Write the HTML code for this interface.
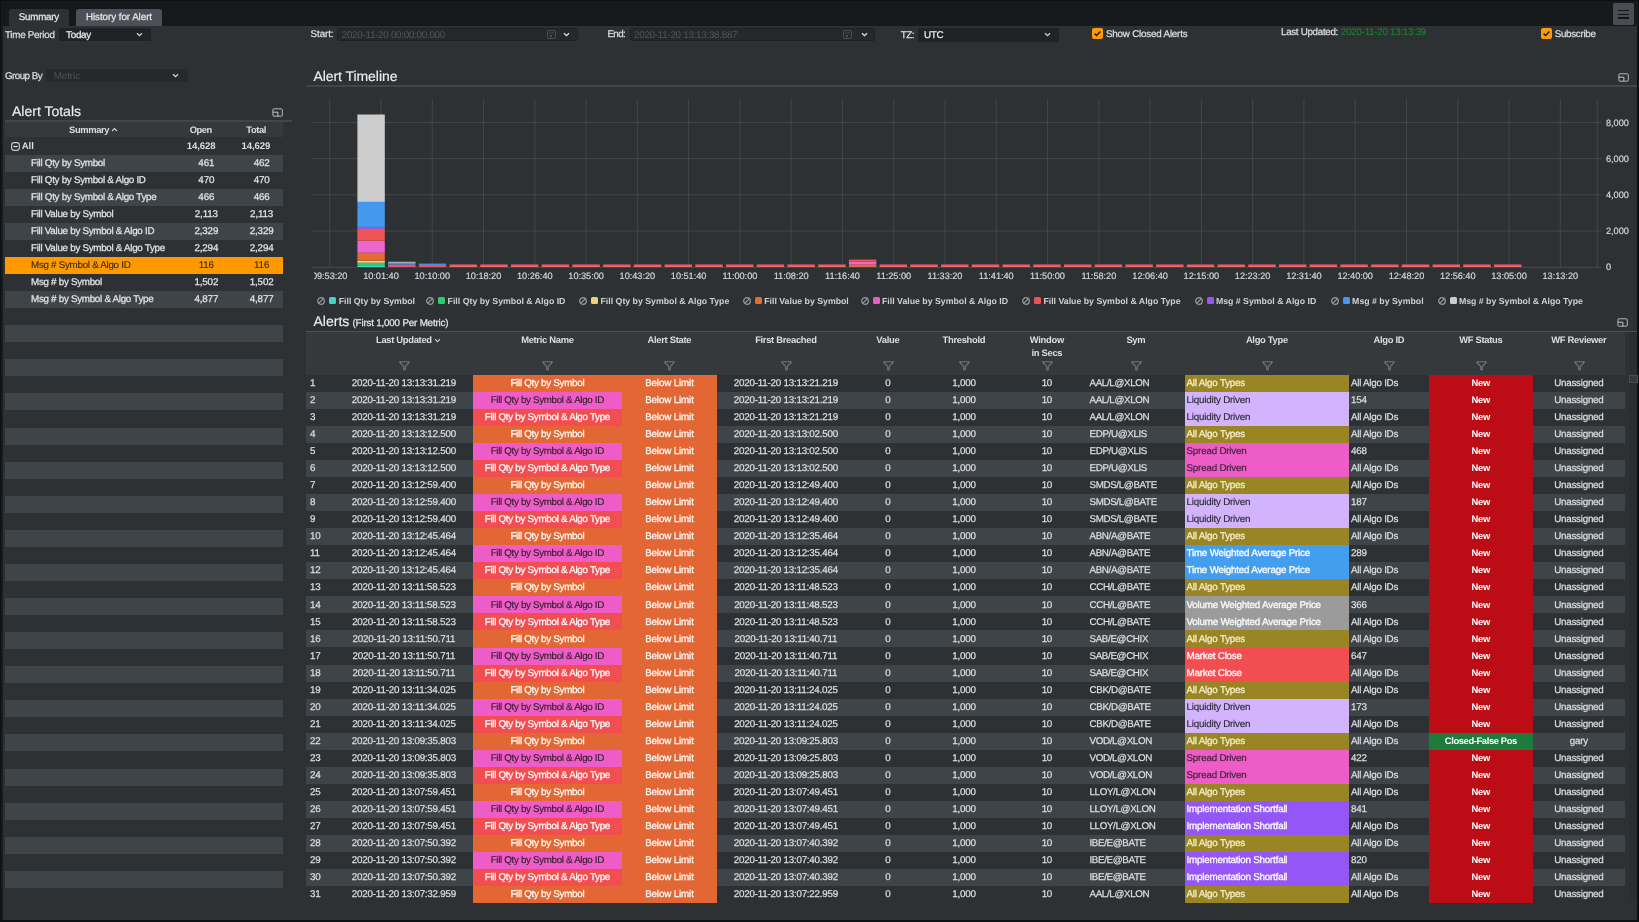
<!DOCTYPE html><html><head><meta charset="utf-8"><style>
*{margin:0;padding:0}
html,body{width:1639px;height:922px;overflow:hidden;background:#0d0f11;font-family:'Liberation Sans',sans-serif;color:#dcdee0}
#wrap{position:absolute;left:0;top:0;width:1639px;height:922px;will-change:transform}
.a{position:absolute}
.t{position:absolute;white-space:nowrap;line-height:20px;text-rendering:geometricPrecision}
</style></head><body><div id="wrap">
<div class="a" style="left:1.00px;top:1.00px;width:1637.00px;height:25.00px;background:#15191c;"></div>
<div class="a" style="left:3.00px;top:26.00px;width:1634.00px;height:894.00px;background:#2d3134;"></div>
<div class="a" style="left:1.00px;top:26.00px;width:2.00px;height:894.00px;background:#191c1f;"></div>
<div class="a" style="left:9.00px;top:9.00px;width:60.00px;height:17.00px;background:#2d3134;border-radius:3px 3px 0 0"></div>
<div class="t" style="left:9.00px;top:8px;font-size:9.8px;letter-spacing:-0.232px;color:#e4e6e8;width:60px;text-align:center;-webkit-text-stroke:0.25px currentColor;"><span style="margin-right:0.232px">Summary</span></div>
<div class="a" style="left:76.00px;top:9.00px;width:86.00px;height:17.00px;background:#4d5157;border-radius:3px 3px 0 0"></div>
<div class="t" style="left:76.00px;top:8px;font-size:9.8px;letter-spacing:-0.051px;color:#e4e6e8;width:86px;text-align:center;-webkit-text-stroke:0.25px currentColor;"><span style="margin-right:0.051px">History for Alert</span></div>
<div class="a" style="left:1613.00px;top:3.00px;width:21.00px;height:22.00px;background:#4a4d52;border-radius:2px"></div>
<div class="a" style="left:1618.00px;top:10.00px;width:11.00px;height:1.40px;background:#15181b;"></div>
<div class="a" style="left:1618.00px;top:13.70px;width:11.00px;height:1.40px;background:#15181b;"></div>
<div class="a" style="left:1618.00px;top:17.30px;width:11.00px;height:1.40px;background:#15181b;"></div>
<div class="t" style="left:5.00px;top:26px;font-size:9.8px;letter-spacing:-0.259px;-webkit-text-stroke:0.25px currentColor;">Time Period</div>
<div class="a" style="left:59.00px;top:28.00px;width:92.00px;height:13.00px;background:#1f2326;border-radius:1px"></div>
<div class="t" style="left:66.00px;top:26px;font-size:9.8px;letter-spacing:-0.231px;color:#e8eaec;-webkit-text-stroke:0.25px currentColor;">Today</div>
<svg class="a" style="left:136.00px;top:31.80px" width="7" height="5" viewBox="0 0 7 5"><path d="M1 1.2 L3.5 3.7 L6 1.2" fill="none" stroke="#d0d2d4" stroke-width="1.3"/></svg>
<div class="t" style="left:310.60px;top:25px;font-size:9.8px;letter-spacing:-0.087px;-webkit-text-stroke:0.25px currentColor;">Start:</div>
<div class="a" style="left:337.00px;top:28.00px;width:241.00px;height:13.00px;background:#25292c;border:1px solid #1f2225;border-radius:2px;box-sizing:border-box"></div>
<div class="t" style="left:341.70px;top:26px;font-size:9.8px;letter-spacing:-0.261px;color:#50555a;">2020-11-20 00:00:00.000</div>
<svg class="a" style="left:546.5px;top:30px" width="9" height="9" viewBox="0 0 9 9"><rect x="0.5" y="0.5" width="8" height="8" rx="1.5" fill="none" stroke="#4b4f53" stroke-width="1"/><path d="M2 3H7" stroke="#4b4f53" stroke-width="0.8"/><rect x="3" y="5" width="2" height="2" fill="#4b4f53"/></svg>
<svg class="a" style="left:562.80px;top:31.80px" width="7" height="5" viewBox="0 0 7 5"><path d="M1 1.2 L3.5 3.7 L6 1.2" fill="none" stroke="#e0e2e4" stroke-width="1.3"/></svg>
<div class="t" style="left:607.50px;top:25px;font-size:9.8px;letter-spacing:-0.664px;-webkit-text-stroke:0.25px currentColor;">End:</div>
<div class="a" style="left:629.50px;top:28.00px;width:245.20px;height:13.00px;background:#25292c;border:1px solid #1f2225;border-radius:2px;box-sizing:border-box"></div>
<div class="t" style="left:634.00px;top:26px;font-size:9.8px;letter-spacing:-0.261px;color:#50555a;">2020-11-20 13:13:38.887</div>
<svg class="a" style="left:843.2px;top:30px" width="9" height="9" viewBox="0 0 9 9"><rect x="0.5" y="0.5" width="8" height="8" rx="1.5" fill="none" stroke="#4b4f53" stroke-width="1"/><path d="M2 3H7" stroke="#4b4f53" stroke-width="0.8"/><rect x="3" y="5" width="2" height="2" fill="#4b4f53"/></svg>
<svg class="a" style="left:861.00px;top:31.80px" width="7" height="5" viewBox="0 0 7 5"><path d="M1 1.2 L3.5 3.7 L6 1.2" fill="none" stroke="#e0e2e4" stroke-width="1.3"/></svg>
<div class="t" style="left:900.80px;top:26px;font-size:9.8px;letter-spacing:-0.568px;-webkit-text-stroke:0.25px currentColor;">TZ:</div>
<div class="a" style="left:918.00px;top:27.50px;width:141.00px;height:14.00px;background:#1f2326;border-radius:1px"></div>
<div class="t" style="left:924.00px;top:26px;font-size:9.8px;letter-spacing:-0.250px;color:#e8eaec;-webkit-text-stroke:0.25px currentColor;">UTC</div>
<svg class="a" style="left:1043.80px;top:31.80px" width="7" height="5" viewBox="0 0 7 5"><path d="M1 1.2 L3.5 3.7 L6 1.2" fill="none" stroke="#d0d2d4" stroke-width="1.3"/></svg>
<div class="a" style="left:1092px;top:28.2px;width:11px;height:11px;background:#fd9b05;border-radius:2px"></div><svg class="a" style="left:1092px;top:28.2px" width="11" height="11" viewBox="0 0 11 11"><path d="M2.6 5.6 L4.6 7.5 L8.4 3.4" fill="none" stroke="#1d1f21" stroke-width="1.5"/></svg>
<div class="t" style="left:1106.00px;top:25px;font-size:9.8px;letter-spacing:-0.197px;-webkit-text-stroke:0.25px currentColor;">Show Closed Alerts</div>
<div class="t" style="left:1281.00px;top:23px;font-size:9.8px;letter-spacing:-0.309px;-webkit-text-stroke:0.25px currentColor;">Last Updated:</div>
<div class="t" style="left:1341.00px;top:23px;font-size:9.8px;letter-spacing:-0.276px;color:#1d8226;-webkit-text-stroke:0.1px currentColor;">2020-11-20 13:13:39</div>
<div class="a" style="left:1541px;top:28px;width:11px;height:11px;background:#fd9b05;border-radius:2px"></div><svg class="a" style="left:1541px;top:28px" width="11" height="11" viewBox="0 0 11 11"><path d="M2.6 5.6 L4.6 7.5 L8.4 3.4" fill="none" stroke="#1d1f21" stroke-width="1.5"/></svg>
<div class="t" style="left:1554.70px;top:25px;font-size:9.8px;letter-spacing:-0.286px;-webkit-text-stroke:0.25px currentColor;">Subscribe</div>
<div class="t" style="left:5.00px;top:67px;font-size:9.8px;letter-spacing:-0.549px;-webkit-text-stroke:0.25px currentColor;">Group By</div>
<div class="a" style="left:46.40px;top:68.50px;width:141.60px;height:13.50px;background:#25292c;border-radius:1px"></div>
<div class="t" style="left:53.70px;top:67px;font-size:9.8px;letter-spacing:-0.062px;color:#4d5256;">Metric</div>
<svg class="a" style="left:172.30px;top:72.80px" width="7" height="5" viewBox="0 0 7 5"><path d="M1 1.2 L3.5 3.7 L6 1.2" fill="none" stroke="#d0d2d4" stroke-width="1.3"/></svg>
<div class="t" style="left:12.00px;top:101px;font-size:14px;color:#eceef0;-webkit-text-stroke:0.15px currentColor;">Alert Totals</div>
<svg class="a" style="left:272.10px;top:107.90px" width="12" height="10" viewBox="0 0 12 10"><rect x="0.9" y="0.8" width="9.4" height="7.4" rx="1" fill="none" stroke="#b4b8be" stroke-width="1"/><path d="M0.9 4.2 H5.9 V8.2" fill="none" stroke="#c4c8ce" stroke-width="1"/></svg>
<div class="a" style="left:5.00px;top:120.20px;width:287.00px;height:1.60px;background:#41464a;"></div>
<div class="a" style="left:5.00px;top:121.80px;width:278.00px;height:15.70px;background:#35393c;"></div>
<div class="t" style="left:69.00px;top:120px;font-size:9.4px;font-weight:700;letter-spacing:-0.362px;">Summary</div>
<svg class="a" style="left:111.00px;top:127.00px" width="7" height="5" viewBox="0 0 7 5"><path d="M1 4 L3.5 1.5 L6 4" fill="none" stroke="#d0d2d4" stroke-width="1.1"/></svg>
<div class="t" style="left:181.00px;top:120px;font-size:9.4px;font-weight:700;letter-spacing:-0.417px;width:40px;text-align:center;"><span style="margin-right:0.417px">Open</span></div>
<div class="t" style="left:236.30px;top:120px;font-size:9.4px;font-weight:700;letter-spacing:-0.401px;width:40px;text-align:center;"><span style="margin-right:0.401px">Total</span></div>
<svg class="a" style="left:10.5px;top:142.3px" width="9" height="9" viewBox="0 0 9 9"><rect x="0.6" y="0.6" width="7.8" height="7.8" rx="2.6" fill="none" stroke="#c8cacc" stroke-width="1.1"/><path d="M2.3 4.5 H6.7" stroke="#e0e2e4" stroke-width="1.2"/></svg>
<div class="t" style="left:21.70px;top:137px;font-size:9.6px;font-weight:700;">All</div>
<div class="t" style="left:181.20px;top:137px;font-size:9.6px;font-weight:700;letter-spacing:-0.107px;width:40px;text-align:center;"><span style="margin-right:0.107px">14,628</span></div>
<div class="t" style="left:236.00px;top:137px;font-size:9.6px;font-weight:700;letter-spacing:-0.107px;width:40px;text-align:center;"><span style="margin-right:0.107px">14,629</span></div>
<div class="a" style="left:5.00px;top:154.70px;width:278.00px;height:17.05px;background:#3f4448;"></div>
<div class="a" style="left:5.00px;top:188.80px;width:278.00px;height:17.05px;background:#3f4448;"></div>
<div class="a" style="left:5.00px;top:222.90px;width:278.00px;height:17.05px;background:#3f4448;"></div>
<div class="a" style="left:5.00px;top:257.00px;width:278.00px;height:17.05px;background:#fe9a00;"></div>
<div class="a" style="left:5.00px;top:291.10px;width:278.00px;height:17.05px;background:#3f4448;"></div>
<div class="a" style="left:5.00px;top:325.20px;width:278.00px;height:17.05px;background:#3f4448;"></div>
<div class="a" style="left:5.00px;top:359.30px;width:278.00px;height:17.05px;background:#3f4448;"></div>
<div class="a" style="left:5.00px;top:393.40px;width:278.00px;height:17.05px;background:#3f4448;"></div>
<div class="a" style="left:5.00px;top:427.50px;width:278.00px;height:17.05px;background:#3f4448;"></div>
<div class="a" style="left:5.00px;top:461.60px;width:278.00px;height:17.05px;background:#3f4448;"></div>
<div class="a" style="left:5.00px;top:495.70px;width:278.00px;height:17.05px;background:#3f4448;"></div>
<div class="a" style="left:5.00px;top:529.80px;width:278.00px;height:17.05px;background:#3f4448;"></div>
<div class="a" style="left:5.00px;top:563.90px;width:278.00px;height:17.05px;background:#3f4448;"></div>
<div class="a" style="left:5.00px;top:598.00px;width:278.00px;height:17.05px;background:#3f4448;"></div>
<div class="a" style="left:5.00px;top:632.10px;width:278.00px;height:17.05px;background:#3f4448;"></div>
<div class="a" style="left:5.00px;top:666.20px;width:278.00px;height:17.05px;background:#3f4448;"></div>
<div class="a" style="left:5.00px;top:700.30px;width:278.00px;height:17.05px;background:#3f4448;"></div>
<div class="a" style="left:5.00px;top:734.40px;width:278.00px;height:17.05px;background:#3f4448;"></div>
<div class="a" style="left:5.00px;top:768.50px;width:278.00px;height:17.05px;background:#3f4448;"></div>
<div class="a" style="left:5.00px;top:802.60px;width:278.00px;height:17.05px;background:#3f4448;"></div>
<div class="a" style="left:5.00px;top:836.70px;width:278.00px;height:17.05px;background:#3f4448;"></div>
<div class="a" style="left:5.00px;top:870.80px;width:278.00px;height:17.05px;background:#3f4448;"></div>
<div class="t" style="left:31.00px;top:154px;font-size:9.8px;letter-spacing:-0.280px;color:#e2e4e6;-webkit-text-stroke:0.25px currentColor;">Fill Qty by Symbol</div>
<div class="t" style="left:186.40px;top:154px;font-size:9.8px;letter-spacing:-0.150px;color:#e2e4e6;width:40px;text-align:center;-webkit-text-stroke:0.25px currentColor;"><span style="margin-right:0.150px">461</span></div>
<div class="t" style="left:241.70px;top:154px;font-size:9.8px;letter-spacing:-0.150px;color:#e2e4e6;width:40px;text-align:center;-webkit-text-stroke:0.25px currentColor;"><span style="margin-right:0.150px">462</span></div>
<div class="t" style="left:31.00px;top:171px;font-size:9.8px;letter-spacing:-0.280px;color:#e2e4e6;-webkit-text-stroke:0.25px currentColor;">Fill Qty by Symbol &amp; Algo ID</div>
<div class="t" style="left:186.40px;top:171px;font-size:9.8px;letter-spacing:-0.150px;color:#e2e4e6;width:40px;text-align:center;-webkit-text-stroke:0.25px currentColor;"><span style="margin-right:0.150px">470</span></div>
<div class="t" style="left:241.70px;top:171px;font-size:9.8px;letter-spacing:-0.150px;color:#e2e4e6;width:40px;text-align:center;-webkit-text-stroke:0.25px currentColor;"><span style="margin-right:0.150px">470</span></div>
<div class="t" style="left:31.00px;top:188px;font-size:9.8px;letter-spacing:-0.280px;color:#e2e4e6;-webkit-text-stroke:0.25px currentColor;">Fill Qty by Symbol &amp; Algo Type</div>
<div class="t" style="left:186.40px;top:188px;font-size:9.8px;letter-spacing:-0.150px;color:#e2e4e6;width:40px;text-align:center;-webkit-text-stroke:0.25px currentColor;"><span style="margin-right:0.150px">466</span></div>
<div class="t" style="left:241.70px;top:188px;font-size:9.8px;letter-spacing:-0.150px;color:#e2e4e6;width:40px;text-align:center;-webkit-text-stroke:0.25px currentColor;"><span style="margin-right:0.150px">466</span></div>
<div class="t" style="left:31.00px;top:205px;font-size:9.8px;letter-spacing:-0.280px;color:#e2e4e6;-webkit-text-stroke:0.25px currentColor;">Fill Value by Symbol</div>
<div class="t" style="left:186.40px;top:205px;font-size:9.8px;letter-spacing:-0.150px;color:#e2e4e6;width:40px;text-align:center;-webkit-text-stroke:0.25px currentColor;"><span style="margin-right:0.150px">2,113</span></div>
<div class="t" style="left:241.70px;top:205px;font-size:9.8px;letter-spacing:-0.150px;color:#e2e4e6;width:40px;text-align:center;-webkit-text-stroke:0.25px currentColor;"><span style="margin-right:0.150px">2,113</span></div>
<div class="t" style="left:31.00px;top:222px;font-size:9.8px;letter-spacing:-0.280px;color:#e2e4e6;-webkit-text-stroke:0.25px currentColor;">Fill Value by Symbol &amp; Algo ID</div>
<div class="t" style="left:186.40px;top:222px;font-size:9.8px;letter-spacing:-0.150px;color:#e2e4e6;width:40px;text-align:center;-webkit-text-stroke:0.25px currentColor;"><span style="margin-right:0.150px">2,329</span></div>
<div class="t" style="left:241.70px;top:222px;font-size:9.8px;letter-spacing:-0.150px;color:#e2e4e6;width:40px;text-align:center;-webkit-text-stroke:0.25px currentColor;"><span style="margin-right:0.150px">2,329</span></div>
<div class="t" style="left:31.00px;top:239px;font-size:9.8px;letter-spacing:-0.280px;color:#e2e4e6;-webkit-text-stroke:0.25px currentColor;">Fill Value by Symbol &amp; Algo Type</div>
<div class="t" style="left:186.40px;top:239px;font-size:9.8px;letter-spacing:-0.150px;color:#e2e4e6;width:40px;text-align:center;-webkit-text-stroke:0.25px currentColor;"><span style="margin-right:0.150px">2,294</span></div>
<div class="t" style="left:241.70px;top:239px;font-size:9.8px;letter-spacing:-0.150px;color:#e2e4e6;width:40px;text-align:center;-webkit-text-stroke:0.25px currentColor;"><span style="margin-right:0.150px">2,294</span></div>
<div class="t" style="left:31.00px;top:256px;font-size:9.8px;letter-spacing:-0.280px;color:#3a2f20;-webkit-text-stroke:0.15px currentColor;">Msg # Symbol &amp; Algo ID</div>
<div class="t" style="left:186.40px;top:256px;font-size:9.8px;letter-spacing:-0.150px;color:#3a2f20;width:40px;text-align:center;-webkit-text-stroke:0.15px currentColor;"><span style="margin-right:0.150px">116</span></div>
<div class="t" style="left:241.70px;top:256px;font-size:9.8px;letter-spacing:-0.150px;color:#3a2f20;width:40px;text-align:center;-webkit-text-stroke:0.15px currentColor;"><span style="margin-right:0.150px">116</span></div>
<div class="t" style="left:31.00px;top:273px;font-size:9.8px;letter-spacing:-0.280px;color:#e2e4e6;-webkit-text-stroke:0.25px currentColor;">Msg # by Symbol</div>
<div class="t" style="left:186.40px;top:273px;font-size:9.8px;letter-spacing:-0.150px;color:#e2e4e6;width:40px;text-align:center;-webkit-text-stroke:0.25px currentColor;"><span style="margin-right:0.150px">1,502</span></div>
<div class="t" style="left:241.70px;top:273px;font-size:9.8px;letter-spacing:-0.150px;color:#e2e4e6;width:40px;text-align:center;-webkit-text-stroke:0.25px currentColor;"><span style="margin-right:0.150px">1,502</span></div>
<div class="t" style="left:31.00px;top:290px;font-size:9.8px;letter-spacing:-0.280px;color:#e2e4e6;-webkit-text-stroke:0.25px currentColor;">Msg # by Symbol &amp; Algo Type</div>
<div class="t" style="left:186.40px;top:290px;font-size:9.8px;letter-spacing:-0.150px;color:#e2e4e6;width:40px;text-align:center;-webkit-text-stroke:0.25px currentColor;"><span style="margin-right:0.150px">4,877</span></div>
<div class="t" style="left:241.70px;top:290px;font-size:9.8px;letter-spacing:-0.150px;color:#e2e4e6;width:40px;text-align:center;-webkit-text-stroke:0.25px currentColor;"><span style="margin-right:0.150px">4,877</span></div>
<div class="t" style="left:313.40px;top:66px;font-size:14px;letter-spacing:-0.058px;color:#eceef0;-webkit-text-stroke:0.15px currentColor;">Alert Timeline</div>
<svg class="a" style="left:1617.50px;top:72.80px" width="12" height="10" viewBox="0 0 12 10"><rect x="0.9" y="0.8" width="9.4" height="7.4" rx="1" fill="none" stroke="#b4b8be" stroke-width="1"/><path d="M0.9 4.2 H5.9 V8.2" fill="none" stroke="#c4c8ce" stroke-width="1"/></svg>
<div class="a" style="left:306.00px;top:85.00px;width:1331.00px;height:1.50px;background:#41464a;"></div>
<svg class="a" style="left:0;top:0" width="1639" height="320"><line x1="329.70" y1="99" x2="329.70" y2="267" stroke="#41464a" stroke-width="1"/><line x1="380.97" y1="99" x2="380.97" y2="267" stroke="#41464a" stroke-width="1"/><line x1="432.25" y1="99" x2="432.25" y2="267" stroke="#41464a" stroke-width="1"/><line x1="483.52" y1="99" x2="483.52" y2="267" stroke="#41464a" stroke-width="1"/><line x1="534.80" y1="99" x2="534.80" y2="267" stroke="#41464a" stroke-width="1"/><line x1="586.08" y1="99" x2="586.08" y2="267" stroke="#41464a" stroke-width="1"/><line x1="637.35" y1="99" x2="637.35" y2="267" stroke="#41464a" stroke-width="1"/><line x1="688.62" y1="99" x2="688.62" y2="267" stroke="#41464a" stroke-width="1"/><line x1="739.90" y1="99" x2="739.90" y2="267" stroke="#41464a" stroke-width="1"/><line x1="791.17" y1="99" x2="791.17" y2="267" stroke="#41464a" stroke-width="1"/><line x1="842.45" y1="99" x2="842.45" y2="267" stroke="#41464a" stroke-width="1"/><line x1="893.72" y1="99" x2="893.72" y2="267" stroke="#41464a" stroke-width="1"/><line x1="945.00" y1="99" x2="945.00" y2="267" stroke="#41464a" stroke-width="1"/><line x1="996.27" y1="99" x2="996.27" y2="267" stroke="#41464a" stroke-width="1"/><line x1="1047.55" y1="99" x2="1047.55" y2="267" stroke="#41464a" stroke-width="1"/><line x1="1098.83" y1="99" x2="1098.83" y2="267" stroke="#41464a" stroke-width="1"/><line x1="1150.10" y1="99" x2="1150.10" y2="267" stroke="#41464a" stroke-width="1"/><line x1="1201.38" y1="99" x2="1201.38" y2="267" stroke="#41464a" stroke-width="1"/><line x1="1252.65" y1="99" x2="1252.65" y2="267" stroke="#41464a" stroke-width="1"/><line x1="1303.92" y1="99" x2="1303.92" y2="267" stroke="#41464a" stroke-width="1"/><line x1="1355.20" y1="99" x2="1355.20" y2="267" stroke="#41464a" stroke-width="1"/><line x1="1406.47" y1="99" x2="1406.47" y2="267" stroke="#41464a" stroke-width="1"/><line x1="1457.75" y1="99" x2="1457.75" y2="267" stroke="#41464a" stroke-width="1"/><line x1="1509.03" y1="99" x2="1509.03" y2="267" stroke="#41464a" stroke-width="1"/><line x1="1560.30" y1="99" x2="1560.30" y2="267" stroke="#41464a" stroke-width="1"/><line x1="1597.3" y1="99" x2="1597.3" y2="267" stroke="#41464a" stroke-width="1"/><line x1="312" y1="122.4" x2="1601.5" y2="122.4" stroke="#41464a" stroke-width="1"/><line x1="312" y1="158.6" x2="1601.5" y2="158.6" stroke="#41464a" stroke-width="1"/><line x1="312" y1="194.8" x2="1601.5" y2="194.8" stroke="#41464a" stroke-width="1"/><line x1="312" y1="231.0" x2="1601.5" y2="231.0" stroke="#41464a" stroke-width="1"/><line x1="312" y1="267.3" x2="1601.5" y2="267.3" stroke="#484d52" stroke-width="1"/><rect x="357.40" y="265.30" width="27.4" height="1.70" fill="#44ddcc"/><rect x="357.40" y="262.70" width="27.4" height="2.60" fill="#33cc66"/><rect x="357.40" y="260.70" width="27.4" height="2.00" fill="#eedd88"/><rect x="357.40" y="252.70" width="27.4" height="8.00" fill="#e36a30"/><rect x="357.40" y="240.70" width="27.4" height="12.00" fill="#ee66cc"/><rect x="357.40" y="229.00" width="27.4" height="11.70" fill="#f05555"/><rect x="357.40" y="226.90" width="27.4" height="2.10" fill="#9955ee"/><rect x="357.40" y="201.90" width="27.4" height="25.00" fill="#4499ee"/><rect x="357.40" y="114.50" width="27.4" height="87.40" fill="#cccccc"/><rect x="388.12" y="264.60" width="27.4" height="2.40" fill="#f04f6a"/><rect x="388.12" y="262.60" width="27.4" height="2.00" fill="#4499ee"/><rect x="388.12" y="261.80" width="27.4" height="0.80" fill="#dddddd"/><rect x="418.84" y="264.90" width="27.4" height="2.10" fill="#f04f6a"/><rect x="418.84" y="263.60" width="27.4" height="1.30" fill="#4499ee"/><rect x="449.56" y="265.90" width="27.4" height="1.10" fill="#f56a5c"/><rect x="449.56" y="264.50" width="27.4" height="1.40" fill="#f85a96"/><rect x="480.28" y="265.90" width="27.4" height="1.10" fill="#f56a5c"/><rect x="480.28" y="264.50" width="27.4" height="1.40" fill="#f85a96"/><rect x="511.00" y="265.90" width="27.4" height="1.10" fill="#f56a5c"/><rect x="511.00" y="264.50" width="27.4" height="1.40" fill="#f85a96"/><rect x="541.72" y="265.90" width="27.4" height="1.10" fill="#f56a5c"/><rect x="541.72" y="264.50" width="27.4" height="1.40" fill="#f85a96"/><rect x="572.44" y="265.90" width="27.4" height="1.10" fill="#f56a5c"/><rect x="572.44" y="264.50" width="27.4" height="1.40" fill="#f85a96"/><rect x="603.16" y="265.90" width="27.4" height="1.10" fill="#f56a5c"/><rect x="603.16" y="264.50" width="27.4" height="1.40" fill="#f85a96"/><rect x="633.88" y="265.90" width="27.4" height="1.10" fill="#f56a5c"/><rect x="633.88" y="264.50" width="27.4" height="1.40" fill="#f85a96"/><rect x="664.60" y="265.90" width="27.4" height="1.10" fill="#f56a5c"/><rect x="664.60" y="264.50" width="27.4" height="1.40" fill="#f85a96"/><rect x="695.32" y="265.90" width="27.4" height="1.10" fill="#f56a5c"/><rect x="695.32" y="264.50" width="27.4" height="1.40" fill="#f85a96"/><rect x="726.04" y="265.90" width="27.4" height="1.10" fill="#f56a5c"/><rect x="726.04" y="264.50" width="27.4" height="1.40" fill="#f85a96"/><rect x="756.76" y="265.90" width="27.4" height="1.10" fill="#f56a5c"/><rect x="756.76" y="264.50" width="27.4" height="1.40" fill="#f85a96"/><rect x="787.48" y="265.90" width="27.4" height="1.10" fill="#f56a5c"/><rect x="787.48" y="264.50" width="27.4" height="1.40" fill="#f85a96"/><rect x="818.20" y="265.90" width="27.4" height="1.10" fill="#f56a5c"/><rect x="818.20" y="264.50" width="27.4" height="1.40" fill="#f85a96"/><rect x="848.92" y="264.60" width="27.4" height="2.40" fill="#e36a30"/><rect x="848.92" y="261.60" width="27.4" height="3.00" fill="#ee66cc"/><rect x="848.92" y="259.60" width="27.4" height="2.00" fill="#f05555"/><rect x="879.64" y="265.90" width="27.4" height="1.10" fill="#f56a5c"/><rect x="879.64" y="264.50" width="27.4" height="1.40" fill="#f85a96"/><rect x="910.36" y="265.90" width="27.4" height="1.10" fill="#f56a5c"/><rect x="910.36" y="264.50" width="27.4" height="1.40" fill="#f85a96"/><rect x="941.08" y="265.90" width="27.4" height="1.10" fill="#f56a5c"/><rect x="941.08" y="264.50" width="27.4" height="1.40" fill="#f85a96"/><rect x="971.80" y="265.90" width="27.4" height="1.10" fill="#f56a5c"/><rect x="971.80" y="264.50" width="27.4" height="1.40" fill="#f85a96"/><rect x="1002.52" y="265.90" width="27.4" height="1.10" fill="#f56a5c"/><rect x="1002.52" y="264.50" width="27.4" height="1.40" fill="#f85a96"/><rect x="1033.24" y="265.90" width="27.4" height="1.10" fill="#f56a5c"/><rect x="1033.24" y="264.50" width="27.4" height="1.40" fill="#f85a96"/><rect x="1063.96" y="265.90" width="27.4" height="1.10" fill="#f56a5c"/><rect x="1063.96" y="264.50" width="27.4" height="1.40" fill="#f85a96"/><rect x="1094.68" y="265.90" width="27.4" height="1.10" fill="#f56a5c"/><rect x="1094.68" y="264.50" width="27.4" height="1.40" fill="#f85a96"/><rect x="1125.40" y="265.90" width="27.4" height="1.10" fill="#f56a5c"/><rect x="1125.40" y="264.50" width="27.4" height="1.40" fill="#f85a96"/><rect x="1156.12" y="265.90" width="27.4" height="1.10" fill="#f56a5c"/><rect x="1156.12" y="264.50" width="27.4" height="1.40" fill="#f85a96"/><rect x="1186.84" y="265.90" width="27.4" height="1.10" fill="#f56a5c"/><rect x="1186.84" y="264.50" width="27.4" height="1.40" fill="#f85a96"/><rect x="1217.56" y="265.90" width="27.4" height="1.10" fill="#f56a5c"/><rect x="1217.56" y="264.50" width="27.4" height="1.40" fill="#f85a96"/><rect x="1248.28" y="265.90" width="27.4" height="1.10" fill="#f56a5c"/><rect x="1248.28" y="264.50" width="27.4" height="1.40" fill="#f85a96"/><rect x="1279.00" y="265.90" width="27.4" height="1.10" fill="#f56a5c"/><rect x="1279.00" y="264.50" width="27.4" height="1.40" fill="#f85a96"/><rect x="1309.72" y="265.90" width="27.4" height="1.10" fill="#f56a5c"/><rect x="1309.72" y="264.50" width="27.4" height="1.40" fill="#f85a96"/><rect x="1340.44" y="265.90" width="27.4" height="1.10" fill="#f56a5c"/><rect x="1340.44" y="264.50" width="27.4" height="1.40" fill="#f85a96"/><rect x="1371.16" y="265.90" width="27.4" height="1.10" fill="#f56a5c"/><rect x="1371.16" y="264.50" width="27.4" height="1.40" fill="#f85a96"/><rect x="1401.88" y="265.90" width="27.4" height="1.10" fill="#f56a5c"/><rect x="1401.88" y="264.50" width="27.4" height="1.40" fill="#f85a96"/><rect x="1432.60" y="265.90" width="27.4" height="1.10" fill="#f56a5c"/><rect x="1432.60" y="264.50" width="27.4" height="1.40" fill="#f85a96"/><rect x="1463.32" y="265.90" width="27.4" height="1.10" fill="#f56a5c"/><rect x="1463.32" y="264.50" width="27.4" height="1.40" fill="#f85a96"/><rect x="1494.04" y="265.90" width="27.4" height="1.10" fill="#f56a5c"/><rect x="1494.04" y="264.50" width="27.4" height="1.40" fill="#f85a96"/></svg>
<div class="t" style="left:1606.00px;top:113px;font-size:9.2px;letter-spacing:-0.020px;color:#d4d6d8;-webkit-text-stroke:0.2px currentColor;">8,000</div>
<div class="t" style="left:1606.00px;top:149px;font-size:9.2px;letter-spacing:-0.020px;color:#d4d6d8;-webkit-text-stroke:0.2px currentColor;">6,000</div>
<div class="t" style="left:1606.00px;top:185px;font-size:9.2px;letter-spacing:-0.020px;color:#d4d6d8;-webkit-text-stroke:0.2px currentColor;">4,000</div>
<div class="t" style="left:1606.00px;top:221px;font-size:9.2px;letter-spacing:-0.020px;color:#d4d6d8;-webkit-text-stroke:0.2px currentColor;">2,000</div>
<div class="t" style="left:1606.00px;top:257px;font-size:9.2px;letter-spacing:-0.020px;color:#d4d6d8;-webkit-text-stroke:0.2px currentColor;">0</div>
<div class="a" style="left:314px;top:0;width:1300px;height:300px;overflow:hidden">
<div class="t" style="left:-14.30px;top:266px;font-size:9.2px;letter-spacing:-0.030px;color:#d4d6d8;width:60px;text-align:center;-webkit-text-stroke:0.2px currentColor;"><span style="margin-right:0.030px">09:53:20</span></div>
<div class="t" style="left:36.97px;top:266px;font-size:9.2px;letter-spacing:-0.030px;color:#d4d6d8;width:60px;text-align:center;-webkit-text-stroke:0.2px currentColor;"><span style="margin-right:0.030px">10:01:40</span></div>
<div class="t" style="left:88.25px;top:266px;font-size:9.2px;letter-spacing:-0.030px;color:#d4d6d8;width:60px;text-align:center;-webkit-text-stroke:0.2px currentColor;"><span style="margin-right:0.030px">10:10:00</span></div>
<div class="t" style="left:139.52px;top:266px;font-size:9.2px;letter-spacing:-0.030px;color:#d4d6d8;width:60px;text-align:center;-webkit-text-stroke:0.2px currentColor;"><span style="margin-right:0.030px">10:18:20</span></div>
<div class="t" style="left:190.80px;top:266px;font-size:9.2px;letter-spacing:-0.030px;color:#d4d6d8;width:60px;text-align:center;-webkit-text-stroke:0.2px currentColor;"><span style="margin-right:0.030px">10:26:40</span></div>
<div class="t" style="left:242.08px;top:266px;font-size:9.2px;letter-spacing:-0.030px;color:#d4d6d8;width:60px;text-align:center;-webkit-text-stroke:0.2px currentColor;"><span style="margin-right:0.030px">10:35:00</span></div>
<div class="t" style="left:293.35px;top:266px;font-size:9.2px;letter-spacing:-0.030px;color:#d4d6d8;width:60px;text-align:center;-webkit-text-stroke:0.2px currentColor;"><span style="margin-right:0.030px">10:43:20</span></div>
<div class="t" style="left:344.62px;top:266px;font-size:9.2px;letter-spacing:-0.030px;color:#d4d6d8;width:60px;text-align:center;-webkit-text-stroke:0.2px currentColor;"><span style="margin-right:0.030px">10:51:40</span></div>
<div class="t" style="left:395.90px;top:266px;font-size:9.2px;letter-spacing:-0.030px;color:#d4d6d8;width:60px;text-align:center;-webkit-text-stroke:0.2px currentColor;"><span style="margin-right:0.030px">11:00:00</span></div>
<div class="t" style="left:447.17px;top:266px;font-size:9.2px;letter-spacing:-0.030px;color:#d4d6d8;width:60px;text-align:center;-webkit-text-stroke:0.2px currentColor;"><span style="margin-right:0.030px">11:08:20</span></div>
<div class="t" style="left:498.45px;top:266px;font-size:9.2px;letter-spacing:-0.030px;color:#d4d6d8;width:60px;text-align:center;-webkit-text-stroke:0.2px currentColor;"><span style="margin-right:0.030px">11:16:40</span></div>
<div class="t" style="left:549.72px;top:266px;font-size:9.2px;letter-spacing:-0.030px;color:#d4d6d8;width:60px;text-align:center;-webkit-text-stroke:0.2px currentColor;"><span style="margin-right:0.030px">11:25:00</span></div>
<div class="t" style="left:601.00px;top:266px;font-size:9.2px;letter-spacing:-0.030px;color:#d4d6d8;width:60px;text-align:center;-webkit-text-stroke:0.2px currentColor;"><span style="margin-right:0.030px">11:33:20</span></div>
<div class="t" style="left:652.27px;top:266px;font-size:9.2px;letter-spacing:-0.030px;color:#d4d6d8;width:60px;text-align:center;-webkit-text-stroke:0.2px currentColor;"><span style="margin-right:0.030px">11:41:40</span></div>
<div class="t" style="left:703.55px;top:266px;font-size:9.2px;letter-spacing:-0.030px;color:#d4d6d8;width:60px;text-align:center;-webkit-text-stroke:0.2px currentColor;"><span style="margin-right:0.030px">11:50:00</span></div>
<div class="t" style="left:754.83px;top:266px;font-size:9.2px;letter-spacing:-0.030px;color:#d4d6d8;width:60px;text-align:center;-webkit-text-stroke:0.2px currentColor;"><span style="margin-right:0.030px">11:58:20</span></div>
<div class="t" style="left:806.10px;top:266px;font-size:9.2px;letter-spacing:-0.030px;color:#d4d6d8;width:60px;text-align:center;-webkit-text-stroke:0.2px currentColor;"><span style="margin-right:0.030px">12:06:40</span></div>
<div class="t" style="left:857.38px;top:266px;font-size:9.2px;letter-spacing:-0.030px;color:#d4d6d8;width:60px;text-align:center;-webkit-text-stroke:0.2px currentColor;"><span style="margin-right:0.030px">12:15:00</span></div>
<div class="t" style="left:908.65px;top:266px;font-size:9.2px;letter-spacing:-0.030px;color:#d4d6d8;width:60px;text-align:center;-webkit-text-stroke:0.2px currentColor;"><span style="margin-right:0.030px">12:23:20</span></div>
<div class="t" style="left:959.92px;top:266px;font-size:9.2px;letter-spacing:-0.030px;color:#d4d6d8;width:60px;text-align:center;-webkit-text-stroke:0.2px currentColor;"><span style="margin-right:0.030px">12:31:40</span></div>
<div class="t" style="left:1011.20px;top:266px;font-size:9.2px;letter-spacing:-0.030px;color:#d4d6d8;width:60px;text-align:center;-webkit-text-stroke:0.2px currentColor;"><span style="margin-right:0.030px">12:40:00</span></div>
<div class="t" style="left:1062.47px;top:266px;font-size:9.2px;letter-spacing:-0.030px;color:#d4d6d8;width:60px;text-align:center;-webkit-text-stroke:0.2px currentColor;"><span style="margin-right:0.030px">12:48:20</span></div>
<div class="t" style="left:1113.75px;top:266px;font-size:9.2px;letter-spacing:-0.030px;color:#d4d6d8;width:60px;text-align:center;-webkit-text-stroke:0.2px currentColor;"><span style="margin-right:0.030px">12:56:40</span></div>
<div class="t" style="left:1165.03px;top:266px;font-size:9.2px;letter-spacing:-0.030px;color:#d4d6d8;width:60px;text-align:center;-webkit-text-stroke:0.2px currentColor;"><span style="margin-right:0.030px">13:05:00</span></div>
<div class="t" style="left:1216.30px;top:266px;font-size:9.2px;letter-spacing:-0.030px;color:#d4d6d8;width:60px;text-align:center;-webkit-text-stroke:0.2px currentColor;"><span style="margin-right:0.030px">13:13:20</span></div>
</div>
<svg class="a" style="left:317.3px;top:296.8px" width="8" height="8" viewBox="0 0 8 8"><circle cx="4" cy="4" r="3.3" fill="none" stroke="#9a9ea2" stroke-width="1.2"/><path d="M1.9 6.1 L6.1 1.9" stroke="#9a9ea2" stroke-width="1.2"/></svg>
<div class="a" style="left:329.30px;top:297.30px;width:7.00px;height:7.00px;background:#3fd4c4;border-radius:1.5px"></div>
<div class="t" style="left:338.70px;top:291px;font-size:8.75px;font-weight:700;color:#cfd1d3;">Fill Qty by Symbol</div>
<svg class="a" style="left:426.2px;top:296.8px" width="8" height="8" viewBox="0 0 8 8"><circle cx="4" cy="4" r="3.3" fill="none" stroke="#9a9ea2" stroke-width="1.2"/><path d="M1.9 6.1 L6.1 1.9" stroke="#9a9ea2" stroke-width="1.2"/></svg>
<div class="a" style="left:438.20px;top:297.30px;width:7.00px;height:7.00px;background:#2ecc6a;border-radius:1.5px"></div>
<div class="t" style="left:447.60px;top:291px;font-size:8.75px;font-weight:700;color:#cfd1d3;">Fill Qty by Symbol &amp; Algo ID</div>
<svg class="a" style="left:579.1px;top:296.8px" width="8" height="8" viewBox="0 0 8 8"><circle cx="4" cy="4" r="3.3" fill="none" stroke="#9a9ea2" stroke-width="1.2"/><path d="M1.9 6.1 L6.1 1.9" stroke="#9a9ea2" stroke-width="1.2"/></svg>
<div class="a" style="left:591.10px;top:297.30px;width:7.00px;height:7.00px;background:#e6d37a;border-radius:1.5px"></div>
<div class="t" style="left:600.50px;top:291px;font-size:8.75px;font-weight:700;color:#cfd1d3;">Fill Qty by Symbol &amp; Algo Type</div>
<svg class="a" style="left:742.8px;top:296.8px" width="8" height="8" viewBox="0 0 8 8"><circle cx="4" cy="4" r="3.3" fill="none" stroke="#9a9ea2" stroke-width="1.2"/><path d="M1.9 6.1 L6.1 1.9" stroke="#9a9ea2" stroke-width="1.2"/></svg>
<div class="a" style="left:754.80px;top:297.30px;width:7.00px;height:7.00px;background:#e36a30;border-radius:1.5px"></div>
<div class="t" style="left:764.20px;top:291px;font-size:8.75px;font-weight:700;color:#cfd1d3;">Fill Value by Symbol</div>
<svg class="a" style="left:860.6px;top:296.8px" width="8" height="8" viewBox="0 0 8 8"><circle cx="4" cy="4" r="3.3" fill="none" stroke="#9a9ea2" stroke-width="1.2"/><path d="M1.9 6.1 L6.1 1.9" stroke="#9a9ea2" stroke-width="1.2"/></svg>
<div class="a" style="left:872.60px;top:297.30px;width:7.00px;height:7.00px;background:#ee5cc8;border-radius:1.5px"></div>
<div class="t" style="left:882.00px;top:291px;font-size:8.75px;font-weight:700;color:#cfd1d3;">Fill Value by Symbol &amp; Algo ID</div>
<svg class="a" style="left:1022.0px;top:296.8px" width="8" height="8" viewBox="0 0 8 8"><circle cx="4" cy="4" r="3.3" fill="none" stroke="#9a9ea2" stroke-width="1.2"/><path d="M1.9 6.1 L6.1 1.9" stroke="#9a9ea2" stroke-width="1.2"/></svg>
<div class="a" style="left:1034.00px;top:297.30px;width:7.00px;height:7.00px;background:#f04f55;border-radius:1.5px"></div>
<div class="t" style="left:1043.40px;top:291px;font-size:8.75px;font-weight:700;color:#cfd1d3;">Fill Value by Symbol &amp; Algo Type</div>
<svg class="a" style="left:1194.5px;top:296.8px" width="8" height="8" viewBox="0 0 8 8"><circle cx="4" cy="4" r="3.3" fill="none" stroke="#9a9ea2" stroke-width="1.2"/><path d="M1.9 6.1 L6.1 1.9" stroke="#9a9ea2" stroke-width="1.2"/></svg>
<div class="a" style="left:1206.50px;top:297.30px;width:7.00px;height:7.00px;background:#9a55f0;border-radius:1.5px"></div>
<div class="t" style="left:1215.90px;top:291px;font-size:8.75px;font-weight:700;color:#cfd1d3;">Msg # Symbol &amp; Algo ID</div>
<svg class="a" style="left:1330.7px;top:296.8px" width="8" height="8" viewBox="0 0 8 8"><circle cx="4" cy="4" r="3.3" fill="none" stroke="#9a9ea2" stroke-width="1.2"/><path d="M1.9 6.1 L6.1 1.9" stroke="#9a9ea2" stroke-width="1.2"/></svg>
<div class="a" style="left:1342.70px;top:297.30px;width:7.00px;height:7.00px;background:#4499ee;border-radius:1.5px"></div>
<div class="t" style="left:1352.10px;top:291px;font-size:8.75px;font-weight:700;color:#cfd1d3;">Msg # by Symbol</div>
<svg class="a" style="left:1437.5px;top:296.8px" width="8" height="8" viewBox="0 0 8 8"><circle cx="4" cy="4" r="3.3" fill="none" stroke="#9a9ea2" stroke-width="1.2"/><path d="M1.9 6.1 L6.1 1.9" stroke="#9a9ea2" stroke-width="1.2"/></svg>
<div class="a" style="left:1449.50px;top:297.30px;width:7.00px;height:7.00px;background:#cccccc;border-radius:1.5px"></div>
<div class="t" style="left:1458.90px;top:291px;font-size:8.75px;font-weight:700;color:#cfd1d3;">Msg # by Symbol &amp; Algo Type</div>
<div class="t" style="left:313.40px;top:311px;font-size:14px;letter-spacing:0.034px;color:#eceef0;-webkit-text-stroke:0.15px currentColor;">Alerts</div>
<div class="t" style="left:352.50px;top:314px;font-size:9.8px;letter-spacing:-0.182px;color:#e2e4e6;-webkit-text-stroke:0.25px currentColor;">(First 1,000 Per Metric)</div>
<svg class="a" style="left:1617.10px;top:318.20px" width="12" height="10" viewBox="0 0 12 10"><rect x="0.9" y="0.8" width="9.4" height="7.4" rx="1" fill="none" stroke="#b4b8be" stroke-width="1"/><path d="M0.9 4.2 H5.9 V8.2" fill="none" stroke="#c4c8ce" stroke-width="1"/></svg>
<div class="a" style="left:306.00px;top:330.80px;width:1331.00px;height:1.40px;background:#4b5056;"></div>
<div class="a" style="left:306.00px;top:332.30px;width:1319.00px;height:42.40px;background:#35393c;"></div>
<div class="a" style="left:1628.60px;top:332.30px;width:8.70px;height:570.00px;background:#2a2e31;"></div>
<div class="a" style="left:1629px;top:375px;width:8.5px;height:8px;background:#35393c;border:1px solid #4a4e52;box-sizing:border-box"></div>
<div class="t" style="left:335.00px;top:330px;font-size:9.4px;font-weight:700;letter-spacing:-0.300px;width:138px;text-align:center;"><span style="margin-right:0.300px">Last Updated</span></div>
<svg class="a" style="left:398.5px;top:360.5px" width="11" height="10" viewBox="0 0 11 10"><path d="M1.2 0.7 H9.8 Q10.7 0.7 10.1 1.5 L6.3 5.3 V8.7 H4.7 V5.3 L0.9 1.5 Q0.3 0.7 1.2 0.7 Z" fill="none" stroke="#71777d" stroke-width="1.1" stroke-linejoin="round"/></svg>
<div class="t" style="left:473.00px;top:330px;font-size:9.4px;font-weight:700;letter-spacing:-0.300px;width:149px;text-align:center;"><span style="margin-right:0.300px">Metric Name</span></div>
<svg class="a" style="left:542.0px;top:360.5px" width="11" height="10" viewBox="0 0 11 10"><path d="M1.2 0.7 H9.8 Q10.7 0.7 10.1 1.5 L6.3 5.3 V8.7 H4.7 V5.3 L0.9 1.5 Q0.3 0.7 1.2 0.7 Z" fill="none" stroke="#71777d" stroke-width="1.1" stroke-linejoin="round"/></svg>
<div class="t" style="left:622.00px;top:330px;font-size:9.4px;font-weight:700;letter-spacing:-0.300px;width:95px;text-align:center;"><span style="margin-right:0.300px">Alert State</span></div>
<svg class="a" style="left:664.0px;top:360.5px" width="11" height="10" viewBox="0 0 11 10"><path d="M1.2 0.7 H9.8 Q10.7 0.7 10.1 1.5 L6.3 5.3 V8.7 H4.7 V5.3 L0.9 1.5 Q0.3 0.7 1.2 0.7 Z" fill="none" stroke="#71777d" stroke-width="1.1" stroke-linejoin="round"/></svg>
<div class="t" style="left:717.00px;top:330px;font-size:9.4px;font-weight:700;letter-spacing:-0.300px;width:138px;text-align:center;"><span style="margin-right:0.300px">First Breached</span></div>
<svg class="a" style="left:780.5px;top:360.5px" width="11" height="10" viewBox="0 0 11 10"><path d="M1.2 0.7 H9.8 Q10.7 0.7 10.1 1.5 L6.3 5.3 V8.7 H4.7 V5.3 L0.9 1.5 Q0.3 0.7 1.2 0.7 Z" fill="none" stroke="#71777d" stroke-width="1.1" stroke-linejoin="round"/></svg>
<div class="t" style="left:855.00px;top:330px;font-size:9.4px;font-weight:700;letter-spacing:-0.300px;width:66px;text-align:center;"><span style="margin-right:0.300px">Value</span></div>
<svg class="a" style="left:882.5px;top:360.5px" width="11" height="10" viewBox="0 0 11 10"><path d="M1.2 0.7 H9.8 Q10.7 0.7 10.1 1.5 L6.3 5.3 V8.7 H4.7 V5.3 L0.9 1.5 Q0.3 0.7 1.2 0.7 Z" fill="none" stroke="#71777d" stroke-width="1.1" stroke-linejoin="round"/></svg>
<div class="t" style="left:921.00px;top:330px;font-size:9.4px;font-weight:700;letter-spacing:-0.300px;width:86px;text-align:center;"><span style="margin-right:0.300px">Threshold</span></div>
<svg class="a" style="left:958.5px;top:360.5px" width="11" height="10" viewBox="0 0 11 10"><path d="M1.2 0.7 H9.8 Q10.7 0.7 10.1 1.5 L6.3 5.3 V8.7 H4.7 V5.3 L0.9 1.5 Q0.3 0.7 1.2 0.7 Z" fill="none" stroke="#71777d" stroke-width="1.1" stroke-linejoin="round"/></svg>
<div class="t" style="left:1007.00px;top:330px;font-size:9.4px;font-weight:700;letter-spacing:-0.300px;width:80px;text-align:center;"><span style="margin-right:0.300px">Window</span></div>
<div class="t" style="left:1007.00px;top:343px;font-size:9.4px;font-weight:700;letter-spacing:-0.300px;width:80px;text-align:center;"><span style="margin-right:0.300px">in Secs</span></div>
<svg class="a" style="left:1041.5px;top:360.5px" width="11" height="10" viewBox="0 0 11 10"><path d="M1.2 0.7 H9.8 Q10.7 0.7 10.1 1.5 L6.3 5.3 V8.7 H4.7 V5.3 L0.9 1.5 Q0.3 0.7 1.2 0.7 Z" fill="none" stroke="#71777d" stroke-width="1.1" stroke-linejoin="round"/></svg>
<div class="t" style="left:1087.00px;top:330px;font-size:9.4px;font-weight:700;letter-spacing:-0.300px;width:98px;text-align:center;"><span style="margin-right:0.300px">Sym</span></div>
<svg class="a" style="left:1130.5px;top:360.5px" width="11" height="10" viewBox="0 0 11 10"><path d="M1.2 0.7 H9.8 Q10.7 0.7 10.1 1.5 L6.3 5.3 V8.7 H4.7 V5.3 L0.9 1.5 Q0.3 0.7 1.2 0.7 Z" fill="none" stroke="#71777d" stroke-width="1.1" stroke-linejoin="round"/></svg>
<div class="t" style="left:1185.00px;top:330px;font-size:9.4px;font-weight:700;letter-spacing:-0.300px;width:164px;text-align:center;"><span style="margin-right:0.300px">Algo Type</span></div>
<svg class="a" style="left:1261.5px;top:360.5px" width="11" height="10" viewBox="0 0 11 10"><path d="M1.2 0.7 H9.8 Q10.7 0.7 10.1 1.5 L6.3 5.3 V8.7 H4.7 V5.3 L0.9 1.5 Q0.3 0.7 1.2 0.7 Z" fill="none" stroke="#71777d" stroke-width="1.1" stroke-linejoin="round"/></svg>
<div class="t" style="left:1349.00px;top:330px;font-size:9.4px;font-weight:700;letter-spacing:-0.300px;width:80px;text-align:center;"><span style="margin-right:0.300px">Algo ID</span></div>
<svg class="a" style="left:1383.5px;top:360.5px" width="11" height="10" viewBox="0 0 11 10"><path d="M1.2 0.7 H9.8 Q10.7 0.7 10.1 1.5 L6.3 5.3 V8.7 H4.7 V5.3 L0.9 1.5 Q0.3 0.7 1.2 0.7 Z" fill="none" stroke="#71777d" stroke-width="1.1" stroke-linejoin="round"/></svg>
<div class="t" style="left:1429.00px;top:330px;font-size:9.4px;font-weight:700;letter-spacing:-0.300px;width:104px;text-align:center;"><span style="margin-right:0.300px">WF Status</span></div>
<svg class="a" style="left:1475.5px;top:360.5px" width="11" height="10" viewBox="0 0 11 10"><path d="M1.2 0.7 H9.8 Q10.7 0.7 10.1 1.5 L6.3 5.3 V8.7 H4.7 V5.3 L0.9 1.5 Q0.3 0.7 1.2 0.7 Z" fill="none" stroke="#71777d" stroke-width="1.1" stroke-linejoin="round"/></svg>
<div class="t" style="left:1533.00px;top:330px;font-size:9.4px;font-weight:700;letter-spacing:-0.300px;width:92px;text-align:center;"><span style="margin-right:0.300px">WF Reviewer</span></div>
<svg class="a" style="left:1573.5px;top:360.5px" width="11" height="10" viewBox="0 0 11 10"><path d="M1.2 0.7 H9.8 Q10.7 0.7 10.1 1.5 L6.3 5.3 V8.7 H4.7 V5.3 L0.9 1.5 Q0.3 0.7 1.2 0.7 Z" fill="none" stroke="#71777d" stroke-width="1.1" stroke-linejoin="round"/></svg>
<svg class="a" style="left:433.50px;top:338.00px" width="7" height="5" viewBox="0 0 7 5"><path d="M1 1.2 L3.5 3.7 L6 1.2" fill="none" stroke="#d0d2d4" stroke-width="1.1"/></svg>
<div class="a" style="left:473.00px;top:374.70px;width:149.00px;height:17.10px;background:#e36734;"></div>
<div class="a" style="left:622.00px;top:374.70px;width:95.00px;height:17.10px;background:#e36734;"></div>
<div class="a" style="left:1185.00px;top:374.70px;width:164.00px;height:17.10px;background:#998524;"></div>
<div class="a" style="left:1429.00px;top:374.70px;width:104.00px;height:17.10px;background:#bc0d16;"></div>
<div class="t" style="left:310.00px;top:374px;font-size:9.8px;letter-spacing:-0.250px;-webkit-text-stroke:0.25px currentColor;">1</div>
<div class="t" style="left:335.00px;top:374px;font-size:9.8px;letter-spacing:-0.220px;width:138px;text-align:center;-webkit-text-stroke:0.25px currentColor;"><span style="margin-right:0.220px">2020-11-20 13:13:31.219</span></div>
<div class="t" style="left:473.00px;top:374px;font-size:9.8px;letter-spacing:-0.280px;color:#fdf6f2;width:149px;text-align:center;-webkit-text-stroke:0.3px currentColor;"><span style="margin-right:0.280px">Fill Qty by Symbol</span></div>
<div class="t" style="left:622.00px;top:374px;font-size:9.8px;letter-spacing:-0.136px;color:#fdf6f2;width:95px;text-align:center;-webkit-text-stroke:0.3px currentColor;"><span style="margin-right:0.136px">Below Limit</span></div>
<div class="t" style="left:717.00px;top:374px;font-size:9.8px;letter-spacing:-0.220px;width:138px;text-align:center;-webkit-text-stroke:0.25px currentColor;"><span style="margin-right:0.220px">2020-11-20 13:13:21.219</span></div>
<div class="t" style="left:855.00px;top:374px;font-size:9.8px;letter-spacing:-0.250px;width:66px;text-align:center;-webkit-text-stroke:0.25px currentColor;"><span style="margin-right:0.250px">0</span></div>
<div class="t" style="left:921.00px;top:374px;font-size:9.8px;letter-spacing:-0.200px;width:86px;text-align:center;-webkit-text-stroke:0.25px currentColor;"><span style="margin-right:0.200px">1,000</span></div>
<div class="t" style="left:1007.00px;top:374px;font-size:9.8px;letter-spacing:-0.250px;width:80px;text-align:center;-webkit-text-stroke:0.25px currentColor;"><span style="margin-right:0.250px">10</span></div>
<div class="t" style="left:1089.50px;top:374px;font-size:9.8px;letter-spacing:-0.360px;-webkit-text-stroke:0.25px currentColor;">AAL/L@XLON</div>
<div class="t" style="left:1186.50px;top:374px;font-size:9.8px;letter-spacing:-0.200px;color:#f3ecc8;-webkit-text-stroke:0.3px currentColor;">All Algo Types</div>
<div class="t" style="left:1351.00px;top:374px;font-size:9.8px;letter-spacing:-0.250px;-webkit-text-stroke:0.25px currentColor;">All Algo IDs</div>
<div class="t" style="left:1429.00px;top:373px;font-size:9.4px;font-weight:700;letter-spacing:-0.227px;color:#fff;width:104px;text-align:center;"><span style="margin-right:0.227px">New</span></div>
<div class="t" style="left:1533.00px;top:374px;font-size:9.8px;letter-spacing:-0.250px;width:92px;text-align:center;-webkit-text-stroke:0.25px currentColor;"><span style="margin-right:0.250px">Unassigned</span></div>
<div class="a" style="left:306.00px;top:391.75px;width:1319.00px;height:17.05px;background:#3f4448;"></div>
<div class="a" style="left:473.00px;top:391.75px;width:149.00px;height:17.10px;background:#ee5cc7;"></div>
<div class="a" style="left:622.00px;top:391.75px;width:95.00px;height:17.10px;background:#e36734;"></div>
<div class="a" style="left:1185.00px;top:391.75px;width:164.00px;height:17.10px;background:#d2b4fc;"></div>
<div class="a" style="left:1429.00px;top:391.75px;width:104.00px;height:17.10px;background:#bc0d16;"></div>
<div class="t" style="left:310.00px;top:391px;font-size:9.8px;letter-spacing:-0.250px;-webkit-text-stroke:0.25px currentColor;">2</div>
<div class="t" style="left:335.00px;top:391px;font-size:9.8px;letter-spacing:-0.220px;width:138px;text-align:center;-webkit-text-stroke:0.25px currentColor;"><span style="margin-right:0.220px">2020-11-20 13:13:31.219</span></div>
<div class="t" style="left:473.00px;top:391px;font-size:9.8px;letter-spacing:-0.330px;color:#35222f;width:149px;text-align:center;-webkit-text-stroke:0.15px currentColor;"><span style="margin-right:0.330px">Fill Qty by Symbol &amp; Algo ID</span></div>
<div class="t" style="left:622.00px;top:391px;font-size:9.8px;letter-spacing:-0.136px;color:#fdf6f2;width:95px;text-align:center;-webkit-text-stroke:0.3px currentColor;"><span style="margin-right:0.136px">Below Limit</span></div>
<div class="t" style="left:717.00px;top:391px;font-size:9.8px;letter-spacing:-0.220px;width:138px;text-align:center;-webkit-text-stroke:0.25px currentColor;"><span style="margin-right:0.220px">2020-11-20 13:13:21.219</span></div>
<div class="t" style="left:855.00px;top:391px;font-size:9.8px;letter-spacing:-0.250px;width:66px;text-align:center;-webkit-text-stroke:0.25px currentColor;"><span style="margin-right:0.250px">0</span></div>
<div class="t" style="left:921.00px;top:391px;font-size:9.8px;letter-spacing:-0.200px;width:86px;text-align:center;-webkit-text-stroke:0.25px currentColor;"><span style="margin-right:0.200px">1,000</span></div>
<div class="t" style="left:1007.00px;top:391px;font-size:9.8px;letter-spacing:-0.250px;width:80px;text-align:center;-webkit-text-stroke:0.25px currentColor;"><span style="margin-right:0.250px">10</span></div>
<div class="t" style="left:1089.50px;top:391px;font-size:9.8px;letter-spacing:-0.360px;-webkit-text-stroke:0.25px currentColor;">AAL/L@XLON</div>
<div class="t" style="left:1186.50px;top:391px;font-size:9.8px;letter-spacing:-0.200px;color:#2f2a38;-webkit-text-stroke:0.15px currentColor;">Liquidity Driven</div>
<div class="t" style="left:1351.00px;top:391px;font-size:9.8px;letter-spacing:-0.250px;-webkit-text-stroke:0.25px currentColor;">154</div>
<div class="t" style="left:1429.00px;top:390px;font-size:9.4px;font-weight:700;letter-spacing:-0.227px;color:#fff;width:104px;text-align:center;"><span style="margin-right:0.227px">New</span></div>
<div class="t" style="left:1533.00px;top:391px;font-size:9.8px;letter-spacing:-0.250px;width:92px;text-align:center;-webkit-text-stroke:0.25px currentColor;"><span style="margin-right:0.250px">Unassigned</span></div>
<div class="a" style="left:473.00px;top:408.80px;width:149.00px;height:17.10px;background:#f24e52;"></div>
<div class="a" style="left:622.00px;top:408.80px;width:95.00px;height:17.10px;background:#e36734;"></div>
<div class="a" style="left:1185.00px;top:408.80px;width:164.00px;height:17.10px;background:#d2b4fc;"></div>
<div class="a" style="left:1429.00px;top:408.80px;width:104.00px;height:17.10px;background:#bc0d16;"></div>
<div class="t" style="left:310.00px;top:408px;font-size:9.8px;letter-spacing:-0.250px;-webkit-text-stroke:0.25px currentColor;">3</div>
<div class="t" style="left:335.00px;top:408px;font-size:9.8px;letter-spacing:-0.220px;width:138px;text-align:center;-webkit-text-stroke:0.25px currentColor;"><span style="margin-right:0.220px">2020-11-20 13:13:31.219</span></div>
<div class="t" style="left:473.00px;top:408px;font-size:9.8px;letter-spacing:-0.280px;color:#fff6f6;width:149px;text-align:center;-webkit-text-stroke:0.3px currentColor;"><span style="margin-right:0.280px">Fill Qty by Symbol &amp; Algo Type</span></div>
<div class="t" style="left:622.00px;top:408px;font-size:9.8px;letter-spacing:-0.136px;color:#fdf6f2;width:95px;text-align:center;-webkit-text-stroke:0.3px currentColor;"><span style="margin-right:0.136px">Below Limit</span></div>
<div class="t" style="left:717.00px;top:408px;font-size:9.8px;letter-spacing:-0.220px;width:138px;text-align:center;-webkit-text-stroke:0.25px currentColor;"><span style="margin-right:0.220px">2020-11-20 13:13:21.219</span></div>
<div class="t" style="left:855.00px;top:408px;font-size:9.8px;letter-spacing:-0.250px;width:66px;text-align:center;-webkit-text-stroke:0.25px currentColor;"><span style="margin-right:0.250px">0</span></div>
<div class="t" style="left:921.00px;top:408px;font-size:9.8px;letter-spacing:-0.200px;width:86px;text-align:center;-webkit-text-stroke:0.25px currentColor;"><span style="margin-right:0.200px">1,000</span></div>
<div class="t" style="left:1007.00px;top:408px;font-size:9.8px;letter-spacing:-0.250px;width:80px;text-align:center;-webkit-text-stroke:0.25px currentColor;"><span style="margin-right:0.250px">10</span></div>
<div class="t" style="left:1089.50px;top:408px;font-size:9.8px;letter-spacing:-0.360px;-webkit-text-stroke:0.25px currentColor;">AAL/L@XLON</div>
<div class="t" style="left:1186.50px;top:408px;font-size:9.8px;letter-spacing:-0.200px;color:#2f2a38;-webkit-text-stroke:0.15px currentColor;">Liquidity Driven</div>
<div class="t" style="left:1351.00px;top:408px;font-size:9.8px;letter-spacing:-0.250px;-webkit-text-stroke:0.25px currentColor;">All Algo IDs</div>
<div class="t" style="left:1429.00px;top:407px;font-size:9.4px;font-weight:700;letter-spacing:-0.227px;color:#fff;width:104px;text-align:center;"><span style="margin-right:0.227px">New</span></div>
<div class="t" style="left:1533.00px;top:408px;font-size:9.8px;letter-spacing:-0.250px;width:92px;text-align:center;-webkit-text-stroke:0.25px currentColor;"><span style="margin-right:0.250px">Unassigned</span></div>
<div class="a" style="left:306.00px;top:425.85px;width:1319.00px;height:17.05px;background:#3f4448;"></div>
<div class="a" style="left:473.00px;top:425.85px;width:149.00px;height:17.10px;background:#e36734;"></div>
<div class="a" style="left:622.00px;top:425.85px;width:95.00px;height:17.10px;background:#e36734;"></div>
<div class="a" style="left:1185.00px;top:425.85px;width:164.00px;height:17.10px;background:#998524;"></div>
<div class="a" style="left:1429.00px;top:425.85px;width:104.00px;height:17.10px;background:#bc0d16;"></div>
<div class="t" style="left:310.00px;top:425px;font-size:9.8px;letter-spacing:-0.250px;-webkit-text-stroke:0.25px currentColor;">4</div>
<div class="t" style="left:335.00px;top:425px;font-size:9.8px;letter-spacing:-0.220px;width:138px;text-align:center;-webkit-text-stroke:0.25px currentColor;"><span style="margin-right:0.220px">2020-11-20 13:13:12.500</span></div>
<div class="t" style="left:473.00px;top:425px;font-size:9.8px;letter-spacing:-0.280px;color:#fdf6f2;width:149px;text-align:center;-webkit-text-stroke:0.3px currentColor;"><span style="margin-right:0.280px">Fill Qty by Symbol</span></div>
<div class="t" style="left:622.00px;top:425px;font-size:9.8px;letter-spacing:-0.136px;color:#fdf6f2;width:95px;text-align:center;-webkit-text-stroke:0.3px currentColor;"><span style="margin-right:0.136px">Below Limit</span></div>
<div class="t" style="left:717.00px;top:425px;font-size:9.8px;letter-spacing:-0.220px;width:138px;text-align:center;-webkit-text-stroke:0.25px currentColor;"><span style="margin-right:0.220px">2020-11-20 13:13:02.500</span></div>
<div class="t" style="left:855.00px;top:425px;font-size:9.8px;letter-spacing:-0.250px;width:66px;text-align:center;-webkit-text-stroke:0.25px currentColor;"><span style="margin-right:0.250px">0</span></div>
<div class="t" style="left:921.00px;top:425px;font-size:9.8px;letter-spacing:-0.200px;width:86px;text-align:center;-webkit-text-stroke:0.25px currentColor;"><span style="margin-right:0.200px">1,000</span></div>
<div class="t" style="left:1007.00px;top:425px;font-size:9.8px;letter-spacing:-0.250px;width:80px;text-align:center;-webkit-text-stroke:0.25px currentColor;"><span style="margin-right:0.250px">10</span></div>
<div class="t" style="left:1089.50px;top:425px;font-size:9.8px;letter-spacing:-0.360px;-webkit-text-stroke:0.25px currentColor;">EDP/U@XLIS</div>
<div class="t" style="left:1186.50px;top:425px;font-size:9.8px;letter-spacing:-0.200px;color:#f3ecc8;-webkit-text-stroke:0.3px currentColor;">All Algo Types</div>
<div class="t" style="left:1351.00px;top:425px;font-size:9.8px;letter-spacing:-0.250px;-webkit-text-stroke:0.25px currentColor;">All Algo IDs</div>
<div class="t" style="left:1429.00px;top:424px;font-size:9.4px;font-weight:700;letter-spacing:-0.227px;color:#fff;width:104px;text-align:center;"><span style="margin-right:0.227px">New</span></div>
<div class="t" style="left:1533.00px;top:425px;font-size:9.8px;letter-spacing:-0.250px;width:92px;text-align:center;-webkit-text-stroke:0.25px currentColor;"><span style="margin-right:0.250px">Unassigned</span></div>
<div class="a" style="left:473.00px;top:442.90px;width:149.00px;height:17.10px;background:#ee5cc7;"></div>
<div class="a" style="left:622.00px;top:442.90px;width:95.00px;height:17.10px;background:#e36734;"></div>
<div class="a" style="left:1185.00px;top:442.90px;width:164.00px;height:17.10px;background:#ee5cc8;"></div>
<div class="a" style="left:1429.00px;top:442.90px;width:104.00px;height:17.10px;background:#bc0d16;"></div>
<div class="t" style="left:310.00px;top:442px;font-size:9.8px;letter-spacing:-0.250px;-webkit-text-stroke:0.25px currentColor;">5</div>
<div class="t" style="left:335.00px;top:442px;font-size:9.8px;letter-spacing:-0.220px;width:138px;text-align:center;-webkit-text-stroke:0.25px currentColor;"><span style="margin-right:0.220px">2020-11-20 13:13:12.500</span></div>
<div class="t" style="left:473.00px;top:442px;font-size:9.8px;letter-spacing:-0.330px;color:#35222f;width:149px;text-align:center;-webkit-text-stroke:0.15px currentColor;"><span style="margin-right:0.330px">Fill Qty by Symbol &amp; Algo ID</span></div>
<div class="t" style="left:622.00px;top:442px;font-size:9.8px;letter-spacing:-0.136px;color:#fdf6f2;width:95px;text-align:center;-webkit-text-stroke:0.3px currentColor;"><span style="margin-right:0.136px">Below Limit</span></div>
<div class="t" style="left:717.00px;top:442px;font-size:9.8px;letter-spacing:-0.220px;width:138px;text-align:center;-webkit-text-stroke:0.25px currentColor;"><span style="margin-right:0.220px">2020-11-20 13:13:02.500</span></div>
<div class="t" style="left:855.00px;top:442px;font-size:9.8px;letter-spacing:-0.250px;width:66px;text-align:center;-webkit-text-stroke:0.25px currentColor;"><span style="margin-right:0.250px">0</span></div>
<div class="t" style="left:921.00px;top:442px;font-size:9.8px;letter-spacing:-0.200px;width:86px;text-align:center;-webkit-text-stroke:0.25px currentColor;"><span style="margin-right:0.200px">1,000</span></div>
<div class="t" style="left:1007.00px;top:442px;font-size:9.8px;letter-spacing:-0.250px;width:80px;text-align:center;-webkit-text-stroke:0.25px currentColor;"><span style="margin-right:0.250px">10</span></div>
<div class="t" style="left:1089.50px;top:442px;font-size:9.8px;letter-spacing:-0.360px;-webkit-text-stroke:0.25px currentColor;">EDP/U@XLIS</div>
<div class="t" style="left:1186.50px;top:442px;font-size:9.8px;letter-spacing:-0.200px;color:#3a2335;-webkit-text-stroke:0.15px currentColor;">Spread Driven</div>
<div class="t" style="left:1351.00px;top:442px;font-size:9.8px;letter-spacing:-0.250px;-webkit-text-stroke:0.25px currentColor;">468</div>
<div class="t" style="left:1429.00px;top:441px;font-size:9.4px;font-weight:700;letter-spacing:-0.227px;color:#fff;width:104px;text-align:center;"><span style="margin-right:0.227px">New</span></div>
<div class="t" style="left:1533.00px;top:442px;font-size:9.8px;letter-spacing:-0.250px;width:92px;text-align:center;-webkit-text-stroke:0.25px currentColor;"><span style="margin-right:0.250px">Unassigned</span></div>
<div class="a" style="left:306.00px;top:459.95px;width:1319.00px;height:17.05px;background:#3f4448;"></div>
<div class="a" style="left:473.00px;top:459.95px;width:149.00px;height:17.10px;background:#f24e52;"></div>
<div class="a" style="left:622.00px;top:459.95px;width:95.00px;height:17.10px;background:#e36734;"></div>
<div class="a" style="left:1185.00px;top:459.95px;width:164.00px;height:17.10px;background:#ee5cc8;"></div>
<div class="a" style="left:1429.00px;top:459.95px;width:104.00px;height:17.10px;background:#bc0d16;"></div>
<div class="t" style="left:310.00px;top:459px;font-size:9.8px;letter-spacing:-0.250px;-webkit-text-stroke:0.25px currentColor;">6</div>
<div class="t" style="left:335.00px;top:459px;font-size:9.8px;letter-spacing:-0.220px;width:138px;text-align:center;-webkit-text-stroke:0.25px currentColor;"><span style="margin-right:0.220px">2020-11-20 13:13:12.500</span></div>
<div class="t" style="left:473.00px;top:459px;font-size:9.8px;letter-spacing:-0.280px;color:#fff6f6;width:149px;text-align:center;-webkit-text-stroke:0.3px currentColor;"><span style="margin-right:0.280px">Fill Qty by Symbol &amp; Algo Type</span></div>
<div class="t" style="left:622.00px;top:459px;font-size:9.8px;letter-spacing:-0.136px;color:#fdf6f2;width:95px;text-align:center;-webkit-text-stroke:0.3px currentColor;"><span style="margin-right:0.136px">Below Limit</span></div>
<div class="t" style="left:717.00px;top:459px;font-size:9.8px;letter-spacing:-0.220px;width:138px;text-align:center;-webkit-text-stroke:0.25px currentColor;"><span style="margin-right:0.220px">2020-11-20 13:13:02.500</span></div>
<div class="t" style="left:855.00px;top:459px;font-size:9.8px;letter-spacing:-0.250px;width:66px;text-align:center;-webkit-text-stroke:0.25px currentColor;"><span style="margin-right:0.250px">0</span></div>
<div class="t" style="left:921.00px;top:459px;font-size:9.8px;letter-spacing:-0.200px;width:86px;text-align:center;-webkit-text-stroke:0.25px currentColor;"><span style="margin-right:0.200px">1,000</span></div>
<div class="t" style="left:1007.00px;top:459px;font-size:9.8px;letter-spacing:-0.250px;width:80px;text-align:center;-webkit-text-stroke:0.25px currentColor;"><span style="margin-right:0.250px">10</span></div>
<div class="t" style="left:1089.50px;top:459px;font-size:9.8px;letter-spacing:-0.360px;-webkit-text-stroke:0.25px currentColor;">EDP/U@XLIS</div>
<div class="t" style="left:1186.50px;top:459px;font-size:9.8px;letter-spacing:-0.200px;color:#3a2335;-webkit-text-stroke:0.15px currentColor;">Spread Driven</div>
<div class="t" style="left:1351.00px;top:459px;font-size:9.8px;letter-spacing:-0.250px;-webkit-text-stroke:0.25px currentColor;">All Algo IDs</div>
<div class="t" style="left:1429.00px;top:458px;font-size:9.4px;font-weight:700;letter-spacing:-0.227px;color:#fff;width:104px;text-align:center;"><span style="margin-right:0.227px">New</span></div>
<div class="t" style="left:1533.00px;top:459px;font-size:9.8px;letter-spacing:-0.250px;width:92px;text-align:center;-webkit-text-stroke:0.25px currentColor;"><span style="margin-right:0.250px">Unassigned</span></div>
<div class="a" style="left:473.00px;top:477.00px;width:149.00px;height:17.10px;background:#e36734;"></div>
<div class="a" style="left:622.00px;top:477.00px;width:95.00px;height:17.10px;background:#e36734;"></div>
<div class="a" style="left:1185.00px;top:477.00px;width:164.00px;height:17.10px;background:#998524;"></div>
<div class="a" style="left:1429.00px;top:477.00px;width:104.00px;height:17.10px;background:#bc0d16;"></div>
<div class="t" style="left:310.00px;top:476px;font-size:9.8px;letter-spacing:-0.250px;-webkit-text-stroke:0.25px currentColor;">7</div>
<div class="t" style="left:335.00px;top:476px;font-size:9.8px;letter-spacing:-0.220px;width:138px;text-align:center;-webkit-text-stroke:0.25px currentColor;"><span style="margin-right:0.220px">2020-11-20 13:12:59.400</span></div>
<div class="t" style="left:473.00px;top:476px;font-size:9.8px;letter-spacing:-0.280px;color:#fdf6f2;width:149px;text-align:center;-webkit-text-stroke:0.3px currentColor;"><span style="margin-right:0.280px">Fill Qty by Symbol</span></div>
<div class="t" style="left:622.00px;top:476px;font-size:9.8px;letter-spacing:-0.136px;color:#fdf6f2;width:95px;text-align:center;-webkit-text-stroke:0.3px currentColor;"><span style="margin-right:0.136px">Below Limit</span></div>
<div class="t" style="left:717.00px;top:476px;font-size:9.8px;letter-spacing:-0.220px;width:138px;text-align:center;-webkit-text-stroke:0.25px currentColor;"><span style="margin-right:0.220px">2020-11-20 13:12:49.400</span></div>
<div class="t" style="left:855.00px;top:476px;font-size:9.8px;letter-spacing:-0.250px;width:66px;text-align:center;-webkit-text-stroke:0.25px currentColor;"><span style="margin-right:0.250px">0</span></div>
<div class="t" style="left:921.00px;top:476px;font-size:9.8px;letter-spacing:-0.200px;width:86px;text-align:center;-webkit-text-stroke:0.25px currentColor;"><span style="margin-right:0.200px">1,000</span></div>
<div class="t" style="left:1007.00px;top:476px;font-size:9.8px;letter-spacing:-0.250px;width:80px;text-align:center;-webkit-text-stroke:0.25px currentColor;"><span style="margin-right:0.250px">10</span></div>
<div class="t" style="left:1089.50px;top:476px;font-size:9.8px;letter-spacing:-0.360px;-webkit-text-stroke:0.25px currentColor;">SMDS/L@BATE</div>
<div class="t" style="left:1186.50px;top:476px;font-size:9.8px;letter-spacing:-0.200px;color:#f3ecc8;-webkit-text-stroke:0.3px currentColor;">All Algo Types</div>
<div class="t" style="left:1351.00px;top:476px;font-size:9.8px;letter-spacing:-0.250px;-webkit-text-stroke:0.25px currentColor;">All Algo IDs</div>
<div class="t" style="left:1429.00px;top:475px;font-size:9.4px;font-weight:700;letter-spacing:-0.227px;color:#fff;width:104px;text-align:center;"><span style="margin-right:0.227px">New</span></div>
<div class="t" style="left:1533.00px;top:476px;font-size:9.8px;letter-spacing:-0.250px;width:92px;text-align:center;-webkit-text-stroke:0.25px currentColor;"><span style="margin-right:0.250px">Unassigned</span></div>
<div class="a" style="left:306.00px;top:494.05px;width:1319.00px;height:17.05px;background:#3f4448;"></div>
<div class="a" style="left:473.00px;top:494.05px;width:149.00px;height:17.10px;background:#ee5cc7;"></div>
<div class="a" style="left:622.00px;top:494.05px;width:95.00px;height:17.10px;background:#e36734;"></div>
<div class="a" style="left:1185.00px;top:494.05px;width:164.00px;height:17.10px;background:#d2b4fc;"></div>
<div class="a" style="left:1429.00px;top:494.05px;width:104.00px;height:17.10px;background:#bc0d16;"></div>
<div class="t" style="left:310.00px;top:493px;font-size:9.8px;letter-spacing:-0.250px;-webkit-text-stroke:0.25px currentColor;">8</div>
<div class="t" style="left:335.00px;top:493px;font-size:9.8px;letter-spacing:-0.220px;width:138px;text-align:center;-webkit-text-stroke:0.25px currentColor;"><span style="margin-right:0.220px">2020-11-20 13:12:59.400</span></div>
<div class="t" style="left:473.00px;top:493px;font-size:9.8px;letter-spacing:-0.330px;color:#35222f;width:149px;text-align:center;-webkit-text-stroke:0.15px currentColor;"><span style="margin-right:0.330px">Fill Qty by Symbol &amp; Algo ID</span></div>
<div class="t" style="left:622.00px;top:493px;font-size:9.8px;letter-spacing:-0.136px;color:#fdf6f2;width:95px;text-align:center;-webkit-text-stroke:0.3px currentColor;"><span style="margin-right:0.136px">Below Limit</span></div>
<div class="t" style="left:717.00px;top:493px;font-size:9.8px;letter-spacing:-0.220px;width:138px;text-align:center;-webkit-text-stroke:0.25px currentColor;"><span style="margin-right:0.220px">2020-11-20 13:12:49.400</span></div>
<div class="t" style="left:855.00px;top:493px;font-size:9.8px;letter-spacing:-0.250px;width:66px;text-align:center;-webkit-text-stroke:0.25px currentColor;"><span style="margin-right:0.250px">0</span></div>
<div class="t" style="left:921.00px;top:493px;font-size:9.8px;letter-spacing:-0.200px;width:86px;text-align:center;-webkit-text-stroke:0.25px currentColor;"><span style="margin-right:0.200px">1,000</span></div>
<div class="t" style="left:1007.00px;top:493px;font-size:9.8px;letter-spacing:-0.250px;width:80px;text-align:center;-webkit-text-stroke:0.25px currentColor;"><span style="margin-right:0.250px">10</span></div>
<div class="t" style="left:1089.50px;top:493px;font-size:9.8px;letter-spacing:-0.360px;-webkit-text-stroke:0.25px currentColor;">SMDS/L@BATE</div>
<div class="t" style="left:1186.50px;top:493px;font-size:9.8px;letter-spacing:-0.200px;color:#2f2a38;-webkit-text-stroke:0.15px currentColor;">Liquidity Driven</div>
<div class="t" style="left:1351.00px;top:493px;font-size:9.8px;letter-spacing:-0.250px;-webkit-text-stroke:0.25px currentColor;">187</div>
<div class="t" style="left:1429.00px;top:492px;font-size:9.4px;font-weight:700;letter-spacing:-0.227px;color:#fff;width:104px;text-align:center;"><span style="margin-right:0.227px">New</span></div>
<div class="t" style="left:1533.00px;top:493px;font-size:9.8px;letter-spacing:-0.250px;width:92px;text-align:center;-webkit-text-stroke:0.25px currentColor;"><span style="margin-right:0.250px">Unassigned</span></div>
<div class="a" style="left:473.00px;top:511.10px;width:149.00px;height:17.10px;background:#f24e52;"></div>
<div class="a" style="left:622.00px;top:511.10px;width:95.00px;height:17.10px;background:#e36734;"></div>
<div class="a" style="left:1185.00px;top:511.10px;width:164.00px;height:17.10px;background:#d2b4fc;"></div>
<div class="a" style="left:1429.00px;top:511.10px;width:104.00px;height:17.10px;background:#bc0d16;"></div>
<div class="t" style="left:310.00px;top:510px;font-size:9.8px;letter-spacing:-0.250px;-webkit-text-stroke:0.25px currentColor;">9</div>
<div class="t" style="left:335.00px;top:510px;font-size:9.8px;letter-spacing:-0.220px;width:138px;text-align:center;-webkit-text-stroke:0.25px currentColor;"><span style="margin-right:0.220px">2020-11-20 13:12:59.400</span></div>
<div class="t" style="left:473.00px;top:510px;font-size:9.8px;letter-spacing:-0.280px;color:#fff6f6;width:149px;text-align:center;-webkit-text-stroke:0.3px currentColor;"><span style="margin-right:0.280px">Fill Qty by Symbol &amp; Algo Type</span></div>
<div class="t" style="left:622.00px;top:510px;font-size:9.8px;letter-spacing:-0.136px;color:#fdf6f2;width:95px;text-align:center;-webkit-text-stroke:0.3px currentColor;"><span style="margin-right:0.136px">Below Limit</span></div>
<div class="t" style="left:717.00px;top:510px;font-size:9.8px;letter-spacing:-0.220px;width:138px;text-align:center;-webkit-text-stroke:0.25px currentColor;"><span style="margin-right:0.220px">2020-11-20 13:12:49.400</span></div>
<div class="t" style="left:855.00px;top:510px;font-size:9.8px;letter-spacing:-0.250px;width:66px;text-align:center;-webkit-text-stroke:0.25px currentColor;"><span style="margin-right:0.250px">0</span></div>
<div class="t" style="left:921.00px;top:510px;font-size:9.8px;letter-spacing:-0.200px;width:86px;text-align:center;-webkit-text-stroke:0.25px currentColor;"><span style="margin-right:0.200px">1,000</span></div>
<div class="t" style="left:1007.00px;top:510px;font-size:9.8px;letter-spacing:-0.250px;width:80px;text-align:center;-webkit-text-stroke:0.25px currentColor;"><span style="margin-right:0.250px">10</span></div>
<div class="t" style="left:1089.50px;top:510px;font-size:9.8px;letter-spacing:-0.360px;-webkit-text-stroke:0.25px currentColor;">SMDS/L@BATE</div>
<div class="t" style="left:1186.50px;top:510px;font-size:9.8px;letter-spacing:-0.200px;color:#2f2a38;-webkit-text-stroke:0.15px currentColor;">Liquidity Driven</div>
<div class="t" style="left:1351.00px;top:510px;font-size:9.8px;letter-spacing:-0.250px;-webkit-text-stroke:0.25px currentColor;">All Algo IDs</div>
<div class="t" style="left:1429.00px;top:509px;font-size:9.4px;font-weight:700;letter-spacing:-0.227px;color:#fff;width:104px;text-align:center;"><span style="margin-right:0.227px">New</span></div>
<div class="t" style="left:1533.00px;top:510px;font-size:9.8px;letter-spacing:-0.250px;width:92px;text-align:center;-webkit-text-stroke:0.25px currentColor;"><span style="margin-right:0.250px">Unassigned</span></div>
<div class="a" style="left:306.00px;top:528.15px;width:1319.00px;height:17.05px;background:#3f4448;"></div>
<div class="a" style="left:473.00px;top:528.15px;width:149.00px;height:17.10px;background:#e36734;"></div>
<div class="a" style="left:622.00px;top:528.15px;width:95.00px;height:17.10px;background:#e36734;"></div>
<div class="a" style="left:1185.00px;top:528.15px;width:164.00px;height:17.10px;background:#998524;"></div>
<div class="a" style="left:1429.00px;top:528.15px;width:104.00px;height:17.10px;background:#bc0d16;"></div>
<div class="t" style="left:310.00px;top:527px;font-size:9.8px;letter-spacing:-0.250px;-webkit-text-stroke:0.25px currentColor;">10</div>
<div class="t" style="left:335.00px;top:527px;font-size:9.8px;letter-spacing:-0.220px;width:138px;text-align:center;-webkit-text-stroke:0.25px currentColor;"><span style="margin-right:0.220px">2020-11-20 13:12:45.464</span></div>
<div class="t" style="left:473.00px;top:527px;font-size:9.8px;letter-spacing:-0.280px;color:#fdf6f2;width:149px;text-align:center;-webkit-text-stroke:0.3px currentColor;"><span style="margin-right:0.280px">Fill Qty by Symbol</span></div>
<div class="t" style="left:622.00px;top:527px;font-size:9.8px;letter-spacing:-0.136px;color:#fdf6f2;width:95px;text-align:center;-webkit-text-stroke:0.3px currentColor;"><span style="margin-right:0.136px">Below Limit</span></div>
<div class="t" style="left:717.00px;top:527px;font-size:9.8px;letter-spacing:-0.220px;width:138px;text-align:center;-webkit-text-stroke:0.25px currentColor;"><span style="margin-right:0.220px">2020-11-20 13:12:35.464</span></div>
<div class="t" style="left:855.00px;top:527px;font-size:9.8px;letter-spacing:-0.250px;width:66px;text-align:center;-webkit-text-stroke:0.25px currentColor;"><span style="margin-right:0.250px">0</span></div>
<div class="t" style="left:921.00px;top:527px;font-size:9.8px;letter-spacing:-0.200px;width:86px;text-align:center;-webkit-text-stroke:0.25px currentColor;"><span style="margin-right:0.200px">1,000</span></div>
<div class="t" style="left:1007.00px;top:527px;font-size:9.8px;letter-spacing:-0.250px;width:80px;text-align:center;-webkit-text-stroke:0.25px currentColor;"><span style="margin-right:0.250px">10</span></div>
<div class="t" style="left:1089.50px;top:527px;font-size:9.8px;letter-spacing:-0.360px;-webkit-text-stroke:0.25px currentColor;">ABN/A@BATE</div>
<div class="t" style="left:1186.50px;top:527px;font-size:9.8px;letter-spacing:-0.200px;color:#f3ecc8;-webkit-text-stroke:0.3px currentColor;">All Algo Types</div>
<div class="t" style="left:1351.00px;top:527px;font-size:9.8px;letter-spacing:-0.250px;-webkit-text-stroke:0.25px currentColor;">All Algo IDs</div>
<div class="t" style="left:1429.00px;top:526px;font-size:9.4px;font-weight:700;letter-spacing:-0.227px;color:#fff;width:104px;text-align:center;"><span style="margin-right:0.227px">New</span></div>
<div class="t" style="left:1533.00px;top:527px;font-size:9.8px;letter-spacing:-0.250px;width:92px;text-align:center;-webkit-text-stroke:0.25px currentColor;"><span style="margin-right:0.250px">Unassigned</span></div>
<div class="a" style="left:473.00px;top:545.20px;width:149.00px;height:17.10px;background:#ee5cc7;"></div>
<div class="a" style="left:622.00px;top:545.20px;width:95.00px;height:17.10px;background:#e36734;"></div>
<div class="a" style="left:1185.00px;top:545.20px;width:164.00px;height:17.10px;background:#449ef0;"></div>
<div class="a" style="left:1429.00px;top:545.20px;width:104.00px;height:17.10px;background:#bc0d16;"></div>
<div class="t" style="left:310.00px;top:544px;font-size:9.8px;letter-spacing:-0.250px;-webkit-text-stroke:0.25px currentColor;">11</div>
<div class="t" style="left:335.00px;top:544px;font-size:9.8px;letter-spacing:-0.220px;width:138px;text-align:center;-webkit-text-stroke:0.25px currentColor;"><span style="margin-right:0.220px">2020-11-20 13:12:45.464</span></div>
<div class="t" style="left:473.00px;top:544px;font-size:9.8px;letter-spacing:-0.330px;color:#35222f;width:149px;text-align:center;-webkit-text-stroke:0.15px currentColor;"><span style="margin-right:0.330px">Fill Qty by Symbol &amp; Algo ID</span></div>
<div class="t" style="left:622.00px;top:544px;font-size:9.8px;letter-spacing:-0.136px;color:#fdf6f2;width:95px;text-align:center;-webkit-text-stroke:0.3px currentColor;"><span style="margin-right:0.136px">Below Limit</span></div>
<div class="t" style="left:717.00px;top:544px;font-size:9.8px;letter-spacing:-0.220px;width:138px;text-align:center;-webkit-text-stroke:0.25px currentColor;"><span style="margin-right:0.220px">2020-11-20 13:12:35.464</span></div>
<div class="t" style="left:855.00px;top:544px;font-size:9.8px;letter-spacing:-0.250px;width:66px;text-align:center;-webkit-text-stroke:0.25px currentColor;"><span style="margin-right:0.250px">0</span></div>
<div class="t" style="left:921.00px;top:544px;font-size:9.8px;letter-spacing:-0.200px;width:86px;text-align:center;-webkit-text-stroke:0.25px currentColor;"><span style="margin-right:0.200px">1,000</span></div>
<div class="t" style="left:1007.00px;top:544px;font-size:9.8px;letter-spacing:-0.250px;width:80px;text-align:center;-webkit-text-stroke:0.25px currentColor;"><span style="margin-right:0.250px">10</span></div>
<div class="t" style="left:1089.50px;top:544px;font-size:9.8px;letter-spacing:-0.360px;-webkit-text-stroke:0.25px currentColor;">ABN/A@BATE</div>
<div class="t" style="left:1186.50px;top:544px;font-size:9.8px;letter-spacing:-0.200px;color:#f8fafc;-webkit-text-stroke:0.35px currentColor;">Time Weighted Average Price</div>
<div class="t" style="left:1351.00px;top:544px;font-size:9.8px;letter-spacing:-0.250px;-webkit-text-stroke:0.25px currentColor;">289</div>
<div class="t" style="left:1429.00px;top:543px;font-size:9.4px;font-weight:700;letter-spacing:-0.227px;color:#fff;width:104px;text-align:center;"><span style="margin-right:0.227px">New</span></div>
<div class="t" style="left:1533.00px;top:544px;font-size:9.8px;letter-spacing:-0.250px;width:92px;text-align:center;-webkit-text-stroke:0.25px currentColor;"><span style="margin-right:0.250px">Unassigned</span></div>
<div class="a" style="left:306.00px;top:562.25px;width:1319.00px;height:17.05px;background:#3f4448;"></div>
<div class="a" style="left:473.00px;top:562.25px;width:149.00px;height:17.10px;background:#f24e52;"></div>
<div class="a" style="left:622.00px;top:562.25px;width:95.00px;height:17.10px;background:#e36734;"></div>
<div class="a" style="left:1185.00px;top:562.25px;width:164.00px;height:17.10px;background:#449ef0;"></div>
<div class="a" style="left:1429.00px;top:562.25px;width:104.00px;height:17.10px;background:#bc0d16;"></div>
<div class="t" style="left:310.00px;top:561px;font-size:9.8px;letter-spacing:-0.250px;-webkit-text-stroke:0.25px currentColor;">12</div>
<div class="t" style="left:335.00px;top:561px;font-size:9.8px;letter-spacing:-0.220px;width:138px;text-align:center;-webkit-text-stroke:0.25px currentColor;"><span style="margin-right:0.220px">2020-11-20 13:12:45.464</span></div>
<div class="t" style="left:473.00px;top:561px;font-size:9.8px;letter-spacing:-0.280px;color:#fff6f6;width:149px;text-align:center;-webkit-text-stroke:0.3px currentColor;"><span style="margin-right:0.280px">Fill Qty by Symbol &amp; Algo Type</span></div>
<div class="t" style="left:622.00px;top:561px;font-size:9.8px;letter-spacing:-0.136px;color:#fdf6f2;width:95px;text-align:center;-webkit-text-stroke:0.3px currentColor;"><span style="margin-right:0.136px">Below Limit</span></div>
<div class="t" style="left:717.00px;top:561px;font-size:9.8px;letter-spacing:-0.220px;width:138px;text-align:center;-webkit-text-stroke:0.25px currentColor;"><span style="margin-right:0.220px">2020-11-20 13:12:35.464</span></div>
<div class="t" style="left:855.00px;top:561px;font-size:9.8px;letter-spacing:-0.250px;width:66px;text-align:center;-webkit-text-stroke:0.25px currentColor;"><span style="margin-right:0.250px">0</span></div>
<div class="t" style="left:921.00px;top:561px;font-size:9.8px;letter-spacing:-0.200px;width:86px;text-align:center;-webkit-text-stroke:0.25px currentColor;"><span style="margin-right:0.200px">1,000</span></div>
<div class="t" style="left:1007.00px;top:561px;font-size:9.8px;letter-spacing:-0.250px;width:80px;text-align:center;-webkit-text-stroke:0.25px currentColor;"><span style="margin-right:0.250px">10</span></div>
<div class="t" style="left:1089.50px;top:561px;font-size:9.8px;letter-spacing:-0.360px;-webkit-text-stroke:0.25px currentColor;">ABN/A@BATE</div>
<div class="t" style="left:1186.50px;top:561px;font-size:9.8px;letter-spacing:-0.200px;color:#f8fafc;-webkit-text-stroke:0.35px currentColor;">Time Weighted Average Price</div>
<div class="t" style="left:1351.00px;top:561px;font-size:9.8px;letter-spacing:-0.250px;-webkit-text-stroke:0.25px currentColor;">All Algo IDs</div>
<div class="t" style="left:1429.00px;top:560px;font-size:9.4px;font-weight:700;letter-spacing:-0.227px;color:#fff;width:104px;text-align:center;"><span style="margin-right:0.227px">New</span></div>
<div class="t" style="left:1533.00px;top:561px;font-size:9.8px;letter-spacing:-0.250px;width:92px;text-align:center;-webkit-text-stroke:0.25px currentColor;"><span style="margin-right:0.250px">Unassigned</span></div>
<div class="a" style="left:473.00px;top:579.30px;width:149.00px;height:17.10px;background:#e36734;"></div>
<div class="a" style="left:622.00px;top:579.30px;width:95.00px;height:17.10px;background:#e36734;"></div>
<div class="a" style="left:1185.00px;top:579.30px;width:164.00px;height:17.10px;background:#998524;"></div>
<div class="a" style="left:1429.00px;top:579.30px;width:104.00px;height:17.10px;background:#bc0d16;"></div>
<div class="t" style="left:310.00px;top:578px;font-size:9.8px;letter-spacing:-0.250px;-webkit-text-stroke:0.25px currentColor;">13</div>
<div class="t" style="left:335.00px;top:578px;font-size:9.8px;letter-spacing:-0.220px;width:138px;text-align:center;-webkit-text-stroke:0.25px currentColor;"><span style="margin-right:0.220px">2020-11-20 13:11:58.523</span></div>
<div class="t" style="left:473.00px;top:578px;font-size:9.8px;letter-spacing:-0.280px;color:#fdf6f2;width:149px;text-align:center;-webkit-text-stroke:0.3px currentColor;"><span style="margin-right:0.280px">Fill Qty by Symbol</span></div>
<div class="t" style="left:622.00px;top:578px;font-size:9.8px;letter-spacing:-0.136px;color:#fdf6f2;width:95px;text-align:center;-webkit-text-stroke:0.3px currentColor;"><span style="margin-right:0.136px">Below Limit</span></div>
<div class="t" style="left:717.00px;top:578px;font-size:9.8px;letter-spacing:-0.220px;width:138px;text-align:center;-webkit-text-stroke:0.25px currentColor;"><span style="margin-right:0.220px">2020-11-20 13:11:48.523</span></div>
<div class="t" style="left:855.00px;top:578px;font-size:9.8px;letter-spacing:-0.250px;width:66px;text-align:center;-webkit-text-stroke:0.25px currentColor;"><span style="margin-right:0.250px">0</span></div>
<div class="t" style="left:921.00px;top:578px;font-size:9.8px;letter-spacing:-0.200px;width:86px;text-align:center;-webkit-text-stroke:0.25px currentColor;"><span style="margin-right:0.200px">1,000</span></div>
<div class="t" style="left:1007.00px;top:578px;font-size:9.8px;letter-spacing:-0.250px;width:80px;text-align:center;-webkit-text-stroke:0.25px currentColor;"><span style="margin-right:0.250px">10</span></div>
<div class="t" style="left:1089.50px;top:578px;font-size:9.8px;letter-spacing:-0.360px;-webkit-text-stroke:0.25px currentColor;">CCH/L@BATE</div>
<div class="t" style="left:1186.50px;top:578px;font-size:9.8px;letter-spacing:-0.200px;color:#f3ecc8;-webkit-text-stroke:0.3px currentColor;">All Algo Types</div>
<div class="t" style="left:1351.00px;top:578px;font-size:9.8px;letter-spacing:-0.250px;-webkit-text-stroke:0.25px currentColor;">All Algo IDs</div>
<div class="t" style="left:1429.00px;top:577px;font-size:9.4px;font-weight:700;letter-spacing:-0.227px;color:#fff;width:104px;text-align:center;"><span style="margin-right:0.227px">New</span></div>
<div class="t" style="left:1533.00px;top:578px;font-size:9.8px;letter-spacing:-0.250px;width:92px;text-align:center;-webkit-text-stroke:0.25px currentColor;"><span style="margin-right:0.250px">Unassigned</span></div>
<div class="a" style="left:306.00px;top:596.35px;width:1319.00px;height:17.05px;background:#3f4448;"></div>
<div class="a" style="left:473.00px;top:596.35px;width:149.00px;height:17.10px;background:#ee5cc7;"></div>
<div class="a" style="left:622.00px;top:596.35px;width:95.00px;height:17.10px;background:#e36734;"></div>
<div class="a" style="left:1185.00px;top:596.35px;width:164.00px;height:17.10px;background:#9b9b9b;"></div>
<div class="a" style="left:1429.00px;top:596.35px;width:104.00px;height:17.10px;background:#bc0d16;"></div>
<div class="t" style="left:310.00px;top:596px;font-size:9.8px;letter-spacing:-0.250px;-webkit-text-stroke:0.25px currentColor;">14</div>
<div class="t" style="left:335.00px;top:596px;font-size:9.8px;letter-spacing:-0.220px;width:138px;text-align:center;-webkit-text-stroke:0.25px currentColor;"><span style="margin-right:0.220px">2020-11-20 13:11:58.523</span></div>
<div class="t" style="left:473.00px;top:596px;font-size:9.8px;letter-spacing:-0.330px;color:#35222f;width:149px;text-align:center;-webkit-text-stroke:0.15px currentColor;"><span style="margin-right:0.330px">Fill Qty by Symbol &amp; Algo ID</span></div>
<div class="t" style="left:622.00px;top:596px;font-size:9.8px;letter-spacing:-0.136px;color:#fdf6f2;width:95px;text-align:center;-webkit-text-stroke:0.3px currentColor;"><span style="margin-right:0.136px">Below Limit</span></div>
<div class="t" style="left:717.00px;top:596px;font-size:9.8px;letter-spacing:-0.220px;width:138px;text-align:center;-webkit-text-stroke:0.25px currentColor;"><span style="margin-right:0.220px">2020-11-20 13:11:48.523</span></div>
<div class="t" style="left:855.00px;top:596px;font-size:9.8px;letter-spacing:-0.250px;width:66px;text-align:center;-webkit-text-stroke:0.25px currentColor;"><span style="margin-right:0.250px">0</span></div>
<div class="t" style="left:921.00px;top:596px;font-size:9.8px;letter-spacing:-0.200px;width:86px;text-align:center;-webkit-text-stroke:0.25px currentColor;"><span style="margin-right:0.200px">1,000</span></div>
<div class="t" style="left:1007.00px;top:596px;font-size:9.8px;letter-spacing:-0.250px;width:80px;text-align:center;-webkit-text-stroke:0.25px currentColor;"><span style="margin-right:0.250px">10</span></div>
<div class="t" style="left:1089.50px;top:596px;font-size:9.8px;letter-spacing:-0.360px;-webkit-text-stroke:0.25px currentColor;">CCH/L@BATE</div>
<div class="t" style="left:1186.50px;top:596px;font-size:9.8px;letter-spacing:-0.200px;color:#f8f8f8;-webkit-text-stroke:0.35px currentColor;">Volume Weighted Average Price</div>
<div class="t" style="left:1351.00px;top:596px;font-size:9.8px;letter-spacing:-0.250px;-webkit-text-stroke:0.25px currentColor;">366</div>
<div class="t" style="left:1429.00px;top:595px;font-size:9.4px;font-weight:700;letter-spacing:-0.227px;color:#fff;width:104px;text-align:center;"><span style="margin-right:0.227px">New</span></div>
<div class="t" style="left:1533.00px;top:596px;font-size:9.8px;letter-spacing:-0.250px;width:92px;text-align:center;-webkit-text-stroke:0.25px currentColor;"><span style="margin-right:0.250px">Unassigned</span></div>
<div class="a" style="left:473.00px;top:613.40px;width:149.00px;height:17.10px;background:#f24e52;"></div>
<div class="a" style="left:622.00px;top:613.40px;width:95.00px;height:17.10px;background:#e36734;"></div>
<div class="a" style="left:1185.00px;top:613.40px;width:164.00px;height:17.10px;background:#9b9b9b;"></div>
<div class="a" style="left:1429.00px;top:613.40px;width:104.00px;height:17.10px;background:#bc0d16;"></div>
<div class="t" style="left:310.00px;top:613px;font-size:9.8px;letter-spacing:-0.250px;-webkit-text-stroke:0.25px currentColor;">15</div>
<div class="t" style="left:335.00px;top:613px;font-size:9.8px;letter-spacing:-0.220px;width:138px;text-align:center;-webkit-text-stroke:0.25px currentColor;"><span style="margin-right:0.220px">2020-11-20 13:11:58.523</span></div>
<div class="t" style="left:473.00px;top:613px;font-size:9.8px;letter-spacing:-0.280px;color:#fff6f6;width:149px;text-align:center;-webkit-text-stroke:0.3px currentColor;"><span style="margin-right:0.280px">Fill Qty by Symbol &amp; Algo Type</span></div>
<div class="t" style="left:622.00px;top:613px;font-size:9.8px;letter-spacing:-0.136px;color:#fdf6f2;width:95px;text-align:center;-webkit-text-stroke:0.3px currentColor;"><span style="margin-right:0.136px">Below Limit</span></div>
<div class="t" style="left:717.00px;top:613px;font-size:9.8px;letter-spacing:-0.220px;width:138px;text-align:center;-webkit-text-stroke:0.25px currentColor;"><span style="margin-right:0.220px">2020-11-20 13:11:48.523</span></div>
<div class="t" style="left:855.00px;top:613px;font-size:9.8px;letter-spacing:-0.250px;width:66px;text-align:center;-webkit-text-stroke:0.25px currentColor;"><span style="margin-right:0.250px">0</span></div>
<div class="t" style="left:921.00px;top:613px;font-size:9.8px;letter-spacing:-0.200px;width:86px;text-align:center;-webkit-text-stroke:0.25px currentColor;"><span style="margin-right:0.200px">1,000</span></div>
<div class="t" style="left:1007.00px;top:613px;font-size:9.8px;letter-spacing:-0.250px;width:80px;text-align:center;-webkit-text-stroke:0.25px currentColor;"><span style="margin-right:0.250px">10</span></div>
<div class="t" style="left:1089.50px;top:613px;font-size:9.8px;letter-spacing:-0.360px;-webkit-text-stroke:0.25px currentColor;">CCH/L@BATE</div>
<div class="t" style="left:1186.50px;top:613px;font-size:9.8px;letter-spacing:-0.200px;color:#f8f8f8;-webkit-text-stroke:0.35px currentColor;">Volume Weighted Average Price</div>
<div class="t" style="left:1351.00px;top:613px;font-size:9.8px;letter-spacing:-0.250px;-webkit-text-stroke:0.25px currentColor;">All Algo IDs</div>
<div class="t" style="left:1429.00px;top:612px;font-size:9.4px;font-weight:700;letter-spacing:-0.227px;color:#fff;width:104px;text-align:center;"><span style="margin-right:0.227px">New</span></div>
<div class="t" style="left:1533.00px;top:613px;font-size:9.8px;letter-spacing:-0.250px;width:92px;text-align:center;-webkit-text-stroke:0.25px currentColor;"><span style="margin-right:0.250px">Unassigned</span></div>
<div class="a" style="left:306.00px;top:630.45px;width:1319.00px;height:17.05px;background:#3f4448;"></div>
<div class="a" style="left:473.00px;top:630.45px;width:149.00px;height:17.10px;background:#e36734;"></div>
<div class="a" style="left:622.00px;top:630.45px;width:95.00px;height:17.10px;background:#e36734;"></div>
<div class="a" style="left:1185.00px;top:630.45px;width:164.00px;height:17.10px;background:#998524;"></div>
<div class="a" style="left:1429.00px;top:630.45px;width:104.00px;height:17.10px;background:#bc0d16;"></div>
<div class="t" style="left:310.00px;top:630px;font-size:9.8px;letter-spacing:-0.250px;-webkit-text-stroke:0.25px currentColor;">16</div>
<div class="t" style="left:335.00px;top:630px;font-size:9.8px;letter-spacing:-0.220px;width:138px;text-align:center;-webkit-text-stroke:0.25px currentColor;"><span style="margin-right:0.220px">2020-11-20 13:11:50.711</span></div>
<div class="t" style="left:473.00px;top:630px;font-size:9.8px;letter-spacing:-0.280px;color:#fdf6f2;width:149px;text-align:center;-webkit-text-stroke:0.3px currentColor;"><span style="margin-right:0.280px">Fill Qty by Symbol</span></div>
<div class="t" style="left:622.00px;top:630px;font-size:9.8px;letter-spacing:-0.136px;color:#fdf6f2;width:95px;text-align:center;-webkit-text-stroke:0.3px currentColor;"><span style="margin-right:0.136px">Below Limit</span></div>
<div class="t" style="left:717.00px;top:630px;font-size:9.8px;letter-spacing:-0.220px;width:138px;text-align:center;-webkit-text-stroke:0.25px currentColor;"><span style="margin-right:0.220px">2020-11-20 13:11:40.711</span></div>
<div class="t" style="left:855.00px;top:630px;font-size:9.8px;letter-spacing:-0.250px;width:66px;text-align:center;-webkit-text-stroke:0.25px currentColor;"><span style="margin-right:0.250px">0</span></div>
<div class="t" style="left:921.00px;top:630px;font-size:9.8px;letter-spacing:-0.200px;width:86px;text-align:center;-webkit-text-stroke:0.25px currentColor;"><span style="margin-right:0.200px">1,000</span></div>
<div class="t" style="left:1007.00px;top:630px;font-size:9.8px;letter-spacing:-0.250px;width:80px;text-align:center;-webkit-text-stroke:0.25px currentColor;"><span style="margin-right:0.250px">10</span></div>
<div class="t" style="left:1089.50px;top:630px;font-size:9.8px;letter-spacing:-0.360px;-webkit-text-stroke:0.25px currentColor;">SAB/E@CHIX</div>
<div class="t" style="left:1186.50px;top:630px;font-size:9.8px;letter-spacing:-0.200px;color:#f3ecc8;-webkit-text-stroke:0.3px currentColor;">All Algo Types</div>
<div class="t" style="left:1351.00px;top:630px;font-size:9.8px;letter-spacing:-0.250px;-webkit-text-stroke:0.25px currentColor;">All Algo IDs</div>
<div class="t" style="left:1429.00px;top:629px;font-size:9.4px;font-weight:700;letter-spacing:-0.227px;color:#fff;width:104px;text-align:center;"><span style="margin-right:0.227px">New</span></div>
<div class="t" style="left:1533.00px;top:630px;font-size:9.8px;letter-spacing:-0.250px;width:92px;text-align:center;-webkit-text-stroke:0.25px currentColor;"><span style="margin-right:0.250px">Unassigned</span></div>
<div class="a" style="left:473.00px;top:647.50px;width:149.00px;height:17.10px;background:#ee5cc7;"></div>
<div class="a" style="left:622.00px;top:647.50px;width:95.00px;height:17.10px;background:#e36734;"></div>
<div class="a" style="left:1185.00px;top:647.50px;width:164.00px;height:17.10px;background:#f24e52;"></div>
<div class="a" style="left:1429.00px;top:647.50px;width:104.00px;height:17.10px;background:#bc0d16;"></div>
<div class="t" style="left:310.00px;top:647px;font-size:9.8px;letter-spacing:-0.250px;-webkit-text-stroke:0.25px currentColor;">17</div>
<div class="t" style="left:335.00px;top:647px;font-size:9.8px;letter-spacing:-0.220px;width:138px;text-align:center;-webkit-text-stroke:0.25px currentColor;"><span style="margin-right:0.220px">2020-11-20 13:11:50.711</span></div>
<div class="t" style="left:473.00px;top:647px;font-size:9.8px;letter-spacing:-0.330px;color:#35222f;width:149px;text-align:center;-webkit-text-stroke:0.15px currentColor;"><span style="margin-right:0.330px">Fill Qty by Symbol &amp; Algo ID</span></div>
<div class="t" style="left:622.00px;top:647px;font-size:9.8px;letter-spacing:-0.136px;color:#fdf6f2;width:95px;text-align:center;-webkit-text-stroke:0.3px currentColor;"><span style="margin-right:0.136px">Below Limit</span></div>
<div class="t" style="left:717.00px;top:647px;font-size:9.8px;letter-spacing:-0.220px;width:138px;text-align:center;-webkit-text-stroke:0.25px currentColor;"><span style="margin-right:0.220px">2020-11-20 13:11:40.711</span></div>
<div class="t" style="left:855.00px;top:647px;font-size:9.8px;letter-spacing:-0.250px;width:66px;text-align:center;-webkit-text-stroke:0.25px currentColor;"><span style="margin-right:0.250px">0</span></div>
<div class="t" style="left:921.00px;top:647px;font-size:9.8px;letter-spacing:-0.200px;width:86px;text-align:center;-webkit-text-stroke:0.25px currentColor;"><span style="margin-right:0.200px">1,000</span></div>
<div class="t" style="left:1007.00px;top:647px;font-size:9.8px;letter-spacing:-0.250px;width:80px;text-align:center;-webkit-text-stroke:0.25px currentColor;"><span style="margin-right:0.250px">10</span></div>
<div class="t" style="left:1089.50px;top:647px;font-size:9.8px;letter-spacing:-0.360px;-webkit-text-stroke:0.25px currentColor;">SAB/E@CHIX</div>
<div class="t" style="left:1186.50px;top:647px;font-size:9.8px;letter-spacing:-0.200px;color:#fff4f4;-webkit-text-stroke:0.35px currentColor;">Market Close</div>
<div class="t" style="left:1351.00px;top:647px;font-size:9.8px;letter-spacing:-0.250px;-webkit-text-stroke:0.25px currentColor;">647</div>
<div class="t" style="left:1429.00px;top:646px;font-size:9.4px;font-weight:700;letter-spacing:-0.227px;color:#fff;width:104px;text-align:center;"><span style="margin-right:0.227px">New</span></div>
<div class="t" style="left:1533.00px;top:647px;font-size:9.8px;letter-spacing:-0.250px;width:92px;text-align:center;-webkit-text-stroke:0.25px currentColor;"><span style="margin-right:0.250px">Unassigned</span></div>
<div class="a" style="left:306.00px;top:664.55px;width:1319.00px;height:17.05px;background:#3f4448;"></div>
<div class="a" style="left:473.00px;top:664.55px;width:149.00px;height:17.10px;background:#f24e52;"></div>
<div class="a" style="left:622.00px;top:664.55px;width:95.00px;height:17.10px;background:#e36734;"></div>
<div class="a" style="left:1185.00px;top:664.55px;width:164.00px;height:17.10px;background:#f24e52;"></div>
<div class="a" style="left:1429.00px;top:664.55px;width:104.00px;height:17.10px;background:#bc0d16;"></div>
<div class="t" style="left:310.00px;top:664px;font-size:9.8px;letter-spacing:-0.250px;-webkit-text-stroke:0.25px currentColor;">18</div>
<div class="t" style="left:335.00px;top:664px;font-size:9.8px;letter-spacing:-0.220px;width:138px;text-align:center;-webkit-text-stroke:0.25px currentColor;"><span style="margin-right:0.220px">2020-11-20 13:11:50.711</span></div>
<div class="t" style="left:473.00px;top:664px;font-size:9.8px;letter-spacing:-0.280px;color:#fff6f6;width:149px;text-align:center;-webkit-text-stroke:0.3px currentColor;"><span style="margin-right:0.280px">Fill Qty by Symbol &amp; Algo Type</span></div>
<div class="t" style="left:622.00px;top:664px;font-size:9.8px;letter-spacing:-0.136px;color:#fdf6f2;width:95px;text-align:center;-webkit-text-stroke:0.3px currentColor;"><span style="margin-right:0.136px">Below Limit</span></div>
<div class="t" style="left:717.00px;top:664px;font-size:9.8px;letter-spacing:-0.220px;width:138px;text-align:center;-webkit-text-stroke:0.25px currentColor;"><span style="margin-right:0.220px">2020-11-20 13:11:40.711</span></div>
<div class="t" style="left:855.00px;top:664px;font-size:9.8px;letter-spacing:-0.250px;width:66px;text-align:center;-webkit-text-stroke:0.25px currentColor;"><span style="margin-right:0.250px">0</span></div>
<div class="t" style="left:921.00px;top:664px;font-size:9.8px;letter-spacing:-0.200px;width:86px;text-align:center;-webkit-text-stroke:0.25px currentColor;"><span style="margin-right:0.200px">1,000</span></div>
<div class="t" style="left:1007.00px;top:664px;font-size:9.8px;letter-spacing:-0.250px;width:80px;text-align:center;-webkit-text-stroke:0.25px currentColor;"><span style="margin-right:0.250px">10</span></div>
<div class="t" style="left:1089.50px;top:664px;font-size:9.8px;letter-spacing:-0.360px;-webkit-text-stroke:0.25px currentColor;">SAB/E@CHIX</div>
<div class="t" style="left:1186.50px;top:664px;font-size:9.8px;letter-spacing:-0.200px;color:#fff4f4;-webkit-text-stroke:0.35px currentColor;">Market Close</div>
<div class="t" style="left:1351.00px;top:664px;font-size:9.8px;letter-spacing:-0.250px;-webkit-text-stroke:0.25px currentColor;">All Algo IDs</div>
<div class="t" style="left:1429.00px;top:663px;font-size:9.4px;font-weight:700;letter-spacing:-0.227px;color:#fff;width:104px;text-align:center;"><span style="margin-right:0.227px">New</span></div>
<div class="t" style="left:1533.00px;top:664px;font-size:9.8px;letter-spacing:-0.250px;width:92px;text-align:center;-webkit-text-stroke:0.25px currentColor;"><span style="margin-right:0.250px">Unassigned</span></div>
<div class="a" style="left:473.00px;top:681.60px;width:149.00px;height:17.10px;background:#e36734;"></div>
<div class="a" style="left:622.00px;top:681.60px;width:95.00px;height:17.10px;background:#e36734;"></div>
<div class="a" style="left:1185.00px;top:681.60px;width:164.00px;height:17.10px;background:#998524;"></div>
<div class="a" style="left:1429.00px;top:681.60px;width:104.00px;height:17.10px;background:#bc0d16;"></div>
<div class="t" style="left:310.00px;top:681px;font-size:9.8px;letter-spacing:-0.250px;-webkit-text-stroke:0.25px currentColor;">19</div>
<div class="t" style="left:335.00px;top:681px;font-size:9.8px;letter-spacing:-0.220px;width:138px;text-align:center;-webkit-text-stroke:0.25px currentColor;"><span style="margin-right:0.220px">2020-11-20 13:11:34.025</span></div>
<div class="t" style="left:473.00px;top:681px;font-size:9.8px;letter-spacing:-0.280px;color:#fdf6f2;width:149px;text-align:center;-webkit-text-stroke:0.3px currentColor;"><span style="margin-right:0.280px">Fill Qty by Symbol</span></div>
<div class="t" style="left:622.00px;top:681px;font-size:9.8px;letter-spacing:-0.136px;color:#fdf6f2;width:95px;text-align:center;-webkit-text-stroke:0.3px currentColor;"><span style="margin-right:0.136px">Below Limit</span></div>
<div class="t" style="left:717.00px;top:681px;font-size:9.8px;letter-spacing:-0.220px;width:138px;text-align:center;-webkit-text-stroke:0.25px currentColor;"><span style="margin-right:0.220px">2020-11-20 13:11:24.025</span></div>
<div class="t" style="left:855.00px;top:681px;font-size:9.8px;letter-spacing:-0.250px;width:66px;text-align:center;-webkit-text-stroke:0.25px currentColor;"><span style="margin-right:0.250px">0</span></div>
<div class="t" style="left:921.00px;top:681px;font-size:9.8px;letter-spacing:-0.200px;width:86px;text-align:center;-webkit-text-stroke:0.25px currentColor;"><span style="margin-right:0.200px">1,000</span></div>
<div class="t" style="left:1007.00px;top:681px;font-size:9.8px;letter-spacing:-0.250px;width:80px;text-align:center;-webkit-text-stroke:0.25px currentColor;"><span style="margin-right:0.250px">10</span></div>
<div class="t" style="left:1089.50px;top:681px;font-size:9.8px;letter-spacing:-0.360px;-webkit-text-stroke:0.25px currentColor;">CBK/D@BATE</div>
<div class="t" style="left:1186.50px;top:681px;font-size:9.8px;letter-spacing:-0.200px;color:#f3ecc8;-webkit-text-stroke:0.3px currentColor;">All Algo Types</div>
<div class="t" style="left:1351.00px;top:681px;font-size:9.8px;letter-spacing:-0.250px;-webkit-text-stroke:0.25px currentColor;">All Algo IDs</div>
<div class="t" style="left:1429.00px;top:680px;font-size:9.4px;font-weight:700;letter-spacing:-0.227px;color:#fff;width:104px;text-align:center;"><span style="margin-right:0.227px">New</span></div>
<div class="t" style="left:1533.00px;top:681px;font-size:9.8px;letter-spacing:-0.250px;width:92px;text-align:center;-webkit-text-stroke:0.25px currentColor;"><span style="margin-right:0.250px">Unassigned</span></div>
<div class="a" style="left:306.00px;top:698.65px;width:1319.00px;height:17.05px;background:#3f4448;"></div>
<div class="a" style="left:473.00px;top:698.65px;width:149.00px;height:17.10px;background:#ee5cc7;"></div>
<div class="a" style="left:622.00px;top:698.65px;width:95.00px;height:17.10px;background:#e36734;"></div>
<div class="a" style="left:1185.00px;top:698.65px;width:164.00px;height:17.10px;background:#d2b4fc;"></div>
<div class="a" style="left:1429.00px;top:698.65px;width:104.00px;height:17.10px;background:#bc0d16;"></div>
<div class="t" style="left:310.00px;top:698px;font-size:9.8px;letter-spacing:-0.250px;-webkit-text-stroke:0.25px currentColor;">20</div>
<div class="t" style="left:335.00px;top:698px;font-size:9.8px;letter-spacing:-0.220px;width:138px;text-align:center;-webkit-text-stroke:0.25px currentColor;"><span style="margin-right:0.220px">2020-11-20 13:11:34.025</span></div>
<div class="t" style="left:473.00px;top:698px;font-size:9.8px;letter-spacing:-0.330px;color:#35222f;width:149px;text-align:center;-webkit-text-stroke:0.15px currentColor;"><span style="margin-right:0.330px">Fill Qty by Symbol &amp; Algo ID</span></div>
<div class="t" style="left:622.00px;top:698px;font-size:9.8px;letter-spacing:-0.136px;color:#fdf6f2;width:95px;text-align:center;-webkit-text-stroke:0.3px currentColor;"><span style="margin-right:0.136px">Below Limit</span></div>
<div class="t" style="left:717.00px;top:698px;font-size:9.8px;letter-spacing:-0.220px;width:138px;text-align:center;-webkit-text-stroke:0.25px currentColor;"><span style="margin-right:0.220px">2020-11-20 13:11:24.025</span></div>
<div class="t" style="left:855.00px;top:698px;font-size:9.8px;letter-spacing:-0.250px;width:66px;text-align:center;-webkit-text-stroke:0.25px currentColor;"><span style="margin-right:0.250px">0</span></div>
<div class="t" style="left:921.00px;top:698px;font-size:9.8px;letter-spacing:-0.200px;width:86px;text-align:center;-webkit-text-stroke:0.25px currentColor;"><span style="margin-right:0.200px">1,000</span></div>
<div class="t" style="left:1007.00px;top:698px;font-size:9.8px;letter-spacing:-0.250px;width:80px;text-align:center;-webkit-text-stroke:0.25px currentColor;"><span style="margin-right:0.250px">10</span></div>
<div class="t" style="left:1089.50px;top:698px;font-size:9.8px;letter-spacing:-0.360px;-webkit-text-stroke:0.25px currentColor;">CBK/D@BATE</div>
<div class="t" style="left:1186.50px;top:698px;font-size:9.8px;letter-spacing:-0.200px;color:#2f2a38;-webkit-text-stroke:0.15px currentColor;">Liquidity Driven</div>
<div class="t" style="left:1351.00px;top:698px;font-size:9.8px;letter-spacing:-0.250px;-webkit-text-stroke:0.25px currentColor;">173</div>
<div class="t" style="left:1429.00px;top:697px;font-size:9.4px;font-weight:700;letter-spacing:-0.227px;color:#fff;width:104px;text-align:center;"><span style="margin-right:0.227px">New</span></div>
<div class="t" style="left:1533.00px;top:698px;font-size:9.8px;letter-spacing:-0.250px;width:92px;text-align:center;-webkit-text-stroke:0.25px currentColor;"><span style="margin-right:0.250px">Unassigned</span></div>
<div class="a" style="left:473.00px;top:715.70px;width:149.00px;height:17.10px;background:#f24e52;"></div>
<div class="a" style="left:622.00px;top:715.70px;width:95.00px;height:17.10px;background:#e36734;"></div>
<div class="a" style="left:1185.00px;top:715.70px;width:164.00px;height:17.10px;background:#d2b4fc;"></div>
<div class="a" style="left:1429.00px;top:715.70px;width:104.00px;height:17.10px;background:#bc0d16;"></div>
<div class="t" style="left:310.00px;top:715px;font-size:9.8px;letter-spacing:-0.250px;-webkit-text-stroke:0.25px currentColor;">21</div>
<div class="t" style="left:335.00px;top:715px;font-size:9.8px;letter-spacing:-0.220px;width:138px;text-align:center;-webkit-text-stroke:0.25px currentColor;"><span style="margin-right:0.220px">2020-11-20 13:11:34.025</span></div>
<div class="t" style="left:473.00px;top:715px;font-size:9.8px;letter-spacing:-0.280px;color:#fff6f6;width:149px;text-align:center;-webkit-text-stroke:0.3px currentColor;"><span style="margin-right:0.280px">Fill Qty by Symbol &amp; Algo Type</span></div>
<div class="t" style="left:622.00px;top:715px;font-size:9.8px;letter-spacing:-0.136px;color:#fdf6f2;width:95px;text-align:center;-webkit-text-stroke:0.3px currentColor;"><span style="margin-right:0.136px">Below Limit</span></div>
<div class="t" style="left:717.00px;top:715px;font-size:9.8px;letter-spacing:-0.220px;width:138px;text-align:center;-webkit-text-stroke:0.25px currentColor;"><span style="margin-right:0.220px">2020-11-20 13:11:24.025</span></div>
<div class="t" style="left:855.00px;top:715px;font-size:9.8px;letter-spacing:-0.250px;width:66px;text-align:center;-webkit-text-stroke:0.25px currentColor;"><span style="margin-right:0.250px">0</span></div>
<div class="t" style="left:921.00px;top:715px;font-size:9.8px;letter-spacing:-0.200px;width:86px;text-align:center;-webkit-text-stroke:0.25px currentColor;"><span style="margin-right:0.200px">1,000</span></div>
<div class="t" style="left:1007.00px;top:715px;font-size:9.8px;letter-spacing:-0.250px;width:80px;text-align:center;-webkit-text-stroke:0.25px currentColor;"><span style="margin-right:0.250px">10</span></div>
<div class="t" style="left:1089.50px;top:715px;font-size:9.8px;letter-spacing:-0.360px;-webkit-text-stroke:0.25px currentColor;">CBK/D@BATE</div>
<div class="t" style="left:1186.50px;top:715px;font-size:9.8px;letter-spacing:-0.200px;color:#2f2a38;-webkit-text-stroke:0.15px currentColor;">Liquidity Driven</div>
<div class="t" style="left:1351.00px;top:715px;font-size:9.8px;letter-spacing:-0.250px;-webkit-text-stroke:0.25px currentColor;">All Algo IDs</div>
<div class="t" style="left:1429.00px;top:714px;font-size:9.4px;font-weight:700;letter-spacing:-0.227px;color:#fff;width:104px;text-align:center;"><span style="margin-right:0.227px">New</span></div>
<div class="t" style="left:1533.00px;top:715px;font-size:9.8px;letter-spacing:-0.250px;width:92px;text-align:center;-webkit-text-stroke:0.25px currentColor;"><span style="margin-right:0.250px">Unassigned</span></div>
<div class="a" style="left:306.00px;top:732.75px;width:1319.00px;height:17.05px;background:#3f4448;"></div>
<div class="a" style="left:473.00px;top:732.75px;width:149.00px;height:17.10px;background:#e36734;"></div>
<div class="a" style="left:622.00px;top:732.75px;width:95.00px;height:17.10px;background:#e36734;"></div>
<div class="a" style="left:1185.00px;top:732.75px;width:164.00px;height:17.10px;background:#998524;"></div>
<div class="a" style="left:1429.00px;top:732.75px;width:104.00px;height:17.10px;background:#1e7b3d;"></div>
<div class="t" style="left:310.00px;top:732px;font-size:9.8px;letter-spacing:-0.250px;-webkit-text-stroke:0.25px currentColor;">22</div>
<div class="t" style="left:335.00px;top:732px;font-size:9.8px;letter-spacing:-0.220px;width:138px;text-align:center;-webkit-text-stroke:0.25px currentColor;"><span style="margin-right:0.220px">2020-11-20 13:09:35.803</span></div>
<div class="t" style="left:473.00px;top:732px;font-size:9.8px;letter-spacing:-0.280px;color:#fdf6f2;width:149px;text-align:center;-webkit-text-stroke:0.3px currentColor;"><span style="margin-right:0.280px">Fill Qty by Symbol</span></div>
<div class="t" style="left:622.00px;top:732px;font-size:9.8px;letter-spacing:-0.136px;color:#fdf6f2;width:95px;text-align:center;-webkit-text-stroke:0.3px currentColor;"><span style="margin-right:0.136px">Below Limit</span></div>
<div class="t" style="left:717.00px;top:732px;font-size:9.8px;letter-spacing:-0.220px;width:138px;text-align:center;-webkit-text-stroke:0.25px currentColor;"><span style="margin-right:0.220px">2020-11-20 13:09:25.803</span></div>
<div class="t" style="left:855.00px;top:732px;font-size:9.8px;letter-spacing:-0.250px;width:66px;text-align:center;-webkit-text-stroke:0.25px currentColor;"><span style="margin-right:0.250px">0</span></div>
<div class="t" style="left:921.00px;top:732px;font-size:9.8px;letter-spacing:-0.200px;width:86px;text-align:center;-webkit-text-stroke:0.25px currentColor;"><span style="margin-right:0.200px">1,000</span></div>
<div class="t" style="left:1007.00px;top:732px;font-size:9.8px;letter-spacing:-0.250px;width:80px;text-align:center;-webkit-text-stroke:0.25px currentColor;"><span style="margin-right:0.250px">10</span></div>
<div class="t" style="left:1089.50px;top:732px;font-size:9.8px;letter-spacing:-0.360px;-webkit-text-stroke:0.25px currentColor;">VOD/L@XLON</div>
<div class="t" style="left:1186.50px;top:732px;font-size:9.8px;letter-spacing:-0.200px;color:#f3ecc8;-webkit-text-stroke:0.3px currentColor;">All Algo Types</div>
<div class="t" style="left:1351.00px;top:732px;font-size:9.8px;letter-spacing:-0.250px;-webkit-text-stroke:0.25px currentColor;">All Algo IDs</div>
<div class="t" style="left:1429.00px;top:731px;font-size:9.4px;font-weight:700;letter-spacing:-0.385px;color:#fff;width:104px;text-align:center;"><span style="margin-right:0.385px">Closed-False Pos</span></div>
<div class="t" style="left:1533.00px;top:732px;font-size:9.8px;letter-spacing:-0.250px;width:92px;text-align:center;-webkit-text-stroke:0.25px currentColor;"><span style="margin-right:0.250px">gary</span></div>
<div class="a" style="left:473.00px;top:749.80px;width:149.00px;height:17.10px;background:#ee5cc7;"></div>
<div class="a" style="left:622.00px;top:749.80px;width:95.00px;height:17.10px;background:#e36734;"></div>
<div class="a" style="left:1185.00px;top:749.80px;width:164.00px;height:17.10px;background:#ee5cc8;"></div>
<div class="a" style="left:1429.00px;top:749.80px;width:104.00px;height:17.10px;background:#bc0d16;"></div>
<div class="t" style="left:310.00px;top:749px;font-size:9.8px;letter-spacing:-0.250px;-webkit-text-stroke:0.25px currentColor;">23</div>
<div class="t" style="left:335.00px;top:749px;font-size:9.8px;letter-spacing:-0.220px;width:138px;text-align:center;-webkit-text-stroke:0.25px currentColor;"><span style="margin-right:0.220px">2020-11-20 13:09:35.803</span></div>
<div class="t" style="left:473.00px;top:749px;font-size:9.8px;letter-spacing:-0.330px;color:#35222f;width:149px;text-align:center;-webkit-text-stroke:0.15px currentColor;"><span style="margin-right:0.330px">Fill Qty by Symbol &amp; Algo ID</span></div>
<div class="t" style="left:622.00px;top:749px;font-size:9.8px;letter-spacing:-0.136px;color:#fdf6f2;width:95px;text-align:center;-webkit-text-stroke:0.3px currentColor;"><span style="margin-right:0.136px">Below Limit</span></div>
<div class="t" style="left:717.00px;top:749px;font-size:9.8px;letter-spacing:-0.220px;width:138px;text-align:center;-webkit-text-stroke:0.25px currentColor;"><span style="margin-right:0.220px">2020-11-20 13:09:25.803</span></div>
<div class="t" style="left:855.00px;top:749px;font-size:9.8px;letter-spacing:-0.250px;width:66px;text-align:center;-webkit-text-stroke:0.25px currentColor;"><span style="margin-right:0.250px">0</span></div>
<div class="t" style="left:921.00px;top:749px;font-size:9.8px;letter-spacing:-0.200px;width:86px;text-align:center;-webkit-text-stroke:0.25px currentColor;"><span style="margin-right:0.200px">1,000</span></div>
<div class="t" style="left:1007.00px;top:749px;font-size:9.8px;letter-spacing:-0.250px;width:80px;text-align:center;-webkit-text-stroke:0.25px currentColor;"><span style="margin-right:0.250px">10</span></div>
<div class="t" style="left:1089.50px;top:749px;font-size:9.8px;letter-spacing:-0.360px;-webkit-text-stroke:0.25px currentColor;">VOD/L@XLON</div>
<div class="t" style="left:1186.50px;top:749px;font-size:9.8px;letter-spacing:-0.200px;color:#3a2335;-webkit-text-stroke:0.15px currentColor;">Spread Driven</div>
<div class="t" style="left:1351.00px;top:749px;font-size:9.8px;letter-spacing:-0.250px;-webkit-text-stroke:0.25px currentColor;">422</div>
<div class="t" style="left:1429.00px;top:748px;font-size:9.4px;font-weight:700;letter-spacing:-0.227px;color:#fff;width:104px;text-align:center;"><span style="margin-right:0.227px">New</span></div>
<div class="t" style="left:1533.00px;top:749px;font-size:9.8px;letter-spacing:-0.250px;width:92px;text-align:center;-webkit-text-stroke:0.25px currentColor;"><span style="margin-right:0.250px">Unassigned</span></div>
<div class="a" style="left:306.00px;top:766.85px;width:1319.00px;height:17.05px;background:#3f4448;"></div>
<div class="a" style="left:473.00px;top:766.85px;width:149.00px;height:17.10px;background:#f24e52;"></div>
<div class="a" style="left:622.00px;top:766.85px;width:95.00px;height:17.10px;background:#e36734;"></div>
<div class="a" style="left:1185.00px;top:766.85px;width:164.00px;height:17.10px;background:#ee5cc8;"></div>
<div class="a" style="left:1429.00px;top:766.85px;width:104.00px;height:17.10px;background:#bc0d16;"></div>
<div class="t" style="left:310.00px;top:766px;font-size:9.8px;letter-spacing:-0.250px;-webkit-text-stroke:0.25px currentColor;">24</div>
<div class="t" style="left:335.00px;top:766px;font-size:9.8px;letter-spacing:-0.220px;width:138px;text-align:center;-webkit-text-stroke:0.25px currentColor;"><span style="margin-right:0.220px">2020-11-20 13:09:35.803</span></div>
<div class="t" style="left:473.00px;top:766px;font-size:9.8px;letter-spacing:-0.280px;color:#fff6f6;width:149px;text-align:center;-webkit-text-stroke:0.3px currentColor;"><span style="margin-right:0.280px">Fill Qty by Symbol &amp; Algo Type</span></div>
<div class="t" style="left:622.00px;top:766px;font-size:9.8px;letter-spacing:-0.136px;color:#fdf6f2;width:95px;text-align:center;-webkit-text-stroke:0.3px currentColor;"><span style="margin-right:0.136px">Below Limit</span></div>
<div class="t" style="left:717.00px;top:766px;font-size:9.8px;letter-spacing:-0.220px;width:138px;text-align:center;-webkit-text-stroke:0.25px currentColor;"><span style="margin-right:0.220px">2020-11-20 13:09:25.803</span></div>
<div class="t" style="left:855.00px;top:766px;font-size:9.8px;letter-spacing:-0.250px;width:66px;text-align:center;-webkit-text-stroke:0.25px currentColor;"><span style="margin-right:0.250px">0</span></div>
<div class="t" style="left:921.00px;top:766px;font-size:9.8px;letter-spacing:-0.200px;width:86px;text-align:center;-webkit-text-stroke:0.25px currentColor;"><span style="margin-right:0.200px">1,000</span></div>
<div class="t" style="left:1007.00px;top:766px;font-size:9.8px;letter-spacing:-0.250px;width:80px;text-align:center;-webkit-text-stroke:0.25px currentColor;"><span style="margin-right:0.250px">10</span></div>
<div class="t" style="left:1089.50px;top:766px;font-size:9.8px;letter-spacing:-0.360px;-webkit-text-stroke:0.25px currentColor;">VOD/L@XLON</div>
<div class="t" style="left:1186.50px;top:766px;font-size:9.8px;letter-spacing:-0.200px;color:#3a2335;-webkit-text-stroke:0.15px currentColor;">Spread Driven</div>
<div class="t" style="left:1351.00px;top:766px;font-size:9.8px;letter-spacing:-0.250px;-webkit-text-stroke:0.25px currentColor;">All Algo IDs</div>
<div class="t" style="left:1429.00px;top:765px;font-size:9.4px;font-weight:700;letter-spacing:-0.227px;color:#fff;width:104px;text-align:center;"><span style="margin-right:0.227px">New</span></div>
<div class="t" style="left:1533.00px;top:766px;font-size:9.8px;letter-spacing:-0.250px;width:92px;text-align:center;-webkit-text-stroke:0.25px currentColor;"><span style="margin-right:0.250px">Unassigned</span></div>
<div class="a" style="left:473.00px;top:783.90px;width:149.00px;height:17.10px;background:#e36734;"></div>
<div class="a" style="left:622.00px;top:783.90px;width:95.00px;height:17.10px;background:#e36734;"></div>
<div class="a" style="left:1185.00px;top:783.90px;width:164.00px;height:17.10px;background:#998524;"></div>
<div class="a" style="left:1429.00px;top:783.90px;width:104.00px;height:17.10px;background:#bc0d16;"></div>
<div class="t" style="left:310.00px;top:783px;font-size:9.8px;letter-spacing:-0.250px;-webkit-text-stroke:0.25px currentColor;">25</div>
<div class="t" style="left:335.00px;top:783px;font-size:9.8px;letter-spacing:-0.220px;width:138px;text-align:center;-webkit-text-stroke:0.25px currentColor;"><span style="margin-right:0.220px">2020-11-20 13:07:59.451</span></div>
<div class="t" style="left:473.00px;top:783px;font-size:9.8px;letter-spacing:-0.280px;color:#fdf6f2;width:149px;text-align:center;-webkit-text-stroke:0.3px currentColor;"><span style="margin-right:0.280px">Fill Qty by Symbol</span></div>
<div class="t" style="left:622.00px;top:783px;font-size:9.8px;letter-spacing:-0.136px;color:#fdf6f2;width:95px;text-align:center;-webkit-text-stroke:0.3px currentColor;"><span style="margin-right:0.136px">Below Limit</span></div>
<div class="t" style="left:717.00px;top:783px;font-size:9.8px;letter-spacing:-0.220px;width:138px;text-align:center;-webkit-text-stroke:0.25px currentColor;"><span style="margin-right:0.220px">2020-11-20 13:07:49.451</span></div>
<div class="t" style="left:855.00px;top:783px;font-size:9.8px;letter-spacing:-0.250px;width:66px;text-align:center;-webkit-text-stroke:0.25px currentColor;"><span style="margin-right:0.250px">0</span></div>
<div class="t" style="left:921.00px;top:783px;font-size:9.8px;letter-spacing:-0.200px;width:86px;text-align:center;-webkit-text-stroke:0.25px currentColor;"><span style="margin-right:0.200px">1,000</span></div>
<div class="t" style="left:1007.00px;top:783px;font-size:9.8px;letter-spacing:-0.250px;width:80px;text-align:center;-webkit-text-stroke:0.25px currentColor;"><span style="margin-right:0.250px">10</span></div>
<div class="t" style="left:1089.50px;top:783px;font-size:9.8px;letter-spacing:-0.360px;-webkit-text-stroke:0.25px currentColor;">LLOY/L@XLON</div>
<div class="t" style="left:1186.50px;top:783px;font-size:9.8px;letter-spacing:-0.200px;color:#f3ecc8;-webkit-text-stroke:0.3px currentColor;">All Algo Types</div>
<div class="t" style="left:1351.00px;top:783px;font-size:9.8px;letter-spacing:-0.250px;-webkit-text-stroke:0.25px currentColor;">All Algo IDs</div>
<div class="t" style="left:1429.00px;top:782px;font-size:9.4px;font-weight:700;letter-spacing:-0.227px;color:#fff;width:104px;text-align:center;"><span style="margin-right:0.227px">New</span></div>
<div class="t" style="left:1533.00px;top:783px;font-size:9.8px;letter-spacing:-0.250px;width:92px;text-align:center;-webkit-text-stroke:0.25px currentColor;"><span style="margin-right:0.250px">Unassigned</span></div>
<div class="a" style="left:306.00px;top:800.95px;width:1319.00px;height:17.05px;background:#3f4448;"></div>
<div class="a" style="left:473.00px;top:800.95px;width:149.00px;height:17.10px;background:#ee5cc7;"></div>
<div class="a" style="left:622.00px;top:800.95px;width:95.00px;height:17.10px;background:#e36734;"></div>
<div class="a" style="left:1185.00px;top:800.95px;width:164.00px;height:17.10px;background:#9456f6;"></div>
<div class="a" style="left:1429.00px;top:800.95px;width:104.00px;height:17.10px;background:#bc0d16;"></div>
<div class="t" style="left:310.00px;top:800px;font-size:9.8px;letter-spacing:-0.250px;-webkit-text-stroke:0.25px currentColor;">26</div>
<div class="t" style="left:335.00px;top:800px;font-size:9.8px;letter-spacing:-0.220px;width:138px;text-align:center;-webkit-text-stroke:0.25px currentColor;"><span style="margin-right:0.220px">2020-11-20 13:07:59.451</span></div>
<div class="t" style="left:473.00px;top:800px;font-size:9.8px;letter-spacing:-0.330px;color:#35222f;width:149px;text-align:center;-webkit-text-stroke:0.15px currentColor;"><span style="margin-right:0.330px">Fill Qty by Symbol &amp; Algo ID</span></div>
<div class="t" style="left:622.00px;top:800px;font-size:9.8px;letter-spacing:-0.136px;color:#fdf6f2;width:95px;text-align:center;-webkit-text-stroke:0.3px currentColor;"><span style="margin-right:0.136px">Below Limit</span></div>
<div class="t" style="left:717.00px;top:800px;font-size:9.8px;letter-spacing:-0.220px;width:138px;text-align:center;-webkit-text-stroke:0.25px currentColor;"><span style="margin-right:0.220px">2020-11-20 13:07:49.451</span></div>
<div class="t" style="left:855.00px;top:800px;font-size:9.8px;letter-spacing:-0.250px;width:66px;text-align:center;-webkit-text-stroke:0.25px currentColor;"><span style="margin-right:0.250px">0</span></div>
<div class="t" style="left:921.00px;top:800px;font-size:9.8px;letter-spacing:-0.200px;width:86px;text-align:center;-webkit-text-stroke:0.25px currentColor;"><span style="margin-right:0.200px">1,000</span></div>
<div class="t" style="left:1007.00px;top:800px;font-size:9.8px;letter-spacing:-0.250px;width:80px;text-align:center;-webkit-text-stroke:0.25px currentColor;"><span style="margin-right:0.250px">10</span></div>
<div class="t" style="left:1089.50px;top:800px;font-size:9.8px;letter-spacing:-0.360px;-webkit-text-stroke:0.25px currentColor;">LLOY/L@XLON</div>
<div class="t" style="left:1186.50px;top:800px;font-size:9.8px;letter-spacing:-0.200px;color:#faf6fe;-webkit-text-stroke:0.35px currentColor;">Implementation Shortfall</div>
<div class="t" style="left:1351.00px;top:800px;font-size:9.8px;letter-spacing:-0.250px;-webkit-text-stroke:0.25px currentColor;">841</div>
<div class="t" style="left:1429.00px;top:799px;font-size:9.4px;font-weight:700;letter-spacing:-0.227px;color:#fff;width:104px;text-align:center;"><span style="margin-right:0.227px">New</span></div>
<div class="t" style="left:1533.00px;top:800px;font-size:9.8px;letter-spacing:-0.250px;width:92px;text-align:center;-webkit-text-stroke:0.25px currentColor;"><span style="margin-right:0.250px">Unassigned</span></div>
<div class="a" style="left:473.00px;top:818.00px;width:149.00px;height:17.10px;background:#f24e52;"></div>
<div class="a" style="left:622.00px;top:818.00px;width:95.00px;height:17.10px;background:#e36734;"></div>
<div class="a" style="left:1185.00px;top:818.00px;width:164.00px;height:17.10px;background:#9456f6;"></div>
<div class="a" style="left:1429.00px;top:818.00px;width:104.00px;height:17.10px;background:#bc0d16;"></div>
<div class="t" style="left:310.00px;top:817px;font-size:9.8px;letter-spacing:-0.250px;-webkit-text-stroke:0.25px currentColor;">27</div>
<div class="t" style="left:335.00px;top:817px;font-size:9.8px;letter-spacing:-0.220px;width:138px;text-align:center;-webkit-text-stroke:0.25px currentColor;"><span style="margin-right:0.220px">2020-11-20 13:07:59.451</span></div>
<div class="t" style="left:473.00px;top:817px;font-size:9.8px;letter-spacing:-0.280px;color:#fff6f6;width:149px;text-align:center;-webkit-text-stroke:0.3px currentColor;"><span style="margin-right:0.280px">Fill Qty by Symbol &amp; Algo Type</span></div>
<div class="t" style="left:622.00px;top:817px;font-size:9.8px;letter-spacing:-0.136px;color:#fdf6f2;width:95px;text-align:center;-webkit-text-stroke:0.3px currentColor;"><span style="margin-right:0.136px">Below Limit</span></div>
<div class="t" style="left:717.00px;top:817px;font-size:9.8px;letter-spacing:-0.220px;width:138px;text-align:center;-webkit-text-stroke:0.25px currentColor;"><span style="margin-right:0.220px">2020-11-20 13:07:49.451</span></div>
<div class="t" style="left:855.00px;top:817px;font-size:9.8px;letter-spacing:-0.250px;width:66px;text-align:center;-webkit-text-stroke:0.25px currentColor;"><span style="margin-right:0.250px">0</span></div>
<div class="t" style="left:921.00px;top:817px;font-size:9.8px;letter-spacing:-0.200px;width:86px;text-align:center;-webkit-text-stroke:0.25px currentColor;"><span style="margin-right:0.200px">1,000</span></div>
<div class="t" style="left:1007.00px;top:817px;font-size:9.8px;letter-spacing:-0.250px;width:80px;text-align:center;-webkit-text-stroke:0.25px currentColor;"><span style="margin-right:0.250px">10</span></div>
<div class="t" style="left:1089.50px;top:817px;font-size:9.8px;letter-spacing:-0.360px;-webkit-text-stroke:0.25px currentColor;">LLOY/L@XLON</div>
<div class="t" style="left:1186.50px;top:817px;font-size:9.8px;letter-spacing:-0.200px;color:#faf6fe;-webkit-text-stroke:0.35px currentColor;">Implementation Shortfall</div>
<div class="t" style="left:1351.00px;top:817px;font-size:9.8px;letter-spacing:-0.250px;-webkit-text-stroke:0.25px currentColor;">All Algo IDs</div>
<div class="t" style="left:1429.00px;top:816px;font-size:9.4px;font-weight:700;letter-spacing:-0.227px;color:#fff;width:104px;text-align:center;"><span style="margin-right:0.227px">New</span></div>
<div class="t" style="left:1533.00px;top:817px;font-size:9.8px;letter-spacing:-0.250px;width:92px;text-align:center;-webkit-text-stroke:0.25px currentColor;"><span style="margin-right:0.250px">Unassigned</span></div>
<div class="a" style="left:306.00px;top:835.05px;width:1319.00px;height:17.05px;background:#3f4448;"></div>
<div class="a" style="left:473.00px;top:835.05px;width:149.00px;height:17.10px;background:#e36734;"></div>
<div class="a" style="left:622.00px;top:835.05px;width:95.00px;height:17.10px;background:#e36734;"></div>
<div class="a" style="left:1185.00px;top:835.05px;width:164.00px;height:17.10px;background:#998524;"></div>
<div class="a" style="left:1429.00px;top:835.05px;width:104.00px;height:17.10px;background:#bc0d16;"></div>
<div class="t" style="left:310.00px;top:834px;font-size:9.8px;letter-spacing:-0.250px;-webkit-text-stroke:0.25px currentColor;">28</div>
<div class="t" style="left:335.00px;top:834px;font-size:9.8px;letter-spacing:-0.220px;width:138px;text-align:center;-webkit-text-stroke:0.25px currentColor;"><span style="margin-right:0.220px">2020-11-20 13:07:50.392</span></div>
<div class="t" style="left:473.00px;top:834px;font-size:9.8px;letter-spacing:-0.280px;color:#fdf6f2;width:149px;text-align:center;-webkit-text-stroke:0.3px currentColor;"><span style="margin-right:0.280px">Fill Qty by Symbol</span></div>
<div class="t" style="left:622.00px;top:834px;font-size:9.8px;letter-spacing:-0.136px;color:#fdf6f2;width:95px;text-align:center;-webkit-text-stroke:0.3px currentColor;"><span style="margin-right:0.136px">Below Limit</span></div>
<div class="t" style="left:717.00px;top:834px;font-size:9.8px;letter-spacing:-0.220px;width:138px;text-align:center;-webkit-text-stroke:0.25px currentColor;"><span style="margin-right:0.220px">2020-11-20 13:07:40.392</span></div>
<div class="t" style="left:855.00px;top:834px;font-size:9.8px;letter-spacing:-0.250px;width:66px;text-align:center;-webkit-text-stroke:0.25px currentColor;"><span style="margin-right:0.250px">0</span></div>
<div class="t" style="left:921.00px;top:834px;font-size:9.8px;letter-spacing:-0.200px;width:86px;text-align:center;-webkit-text-stroke:0.25px currentColor;"><span style="margin-right:0.200px">1,000</span></div>
<div class="t" style="left:1007.00px;top:834px;font-size:9.8px;letter-spacing:-0.250px;width:80px;text-align:center;-webkit-text-stroke:0.25px currentColor;"><span style="margin-right:0.250px">10</span></div>
<div class="t" style="left:1089.50px;top:834px;font-size:9.8px;letter-spacing:-0.360px;-webkit-text-stroke:0.25px currentColor;">IBE/E@BATE</div>
<div class="t" style="left:1186.50px;top:834px;font-size:9.8px;letter-spacing:-0.200px;color:#f3ecc8;-webkit-text-stroke:0.3px currentColor;">All Algo Types</div>
<div class="t" style="left:1351.00px;top:834px;font-size:9.8px;letter-spacing:-0.250px;-webkit-text-stroke:0.25px currentColor;">All Algo IDs</div>
<div class="t" style="left:1429.00px;top:833px;font-size:9.4px;font-weight:700;letter-spacing:-0.227px;color:#fff;width:104px;text-align:center;"><span style="margin-right:0.227px">New</span></div>
<div class="t" style="left:1533.00px;top:834px;font-size:9.8px;letter-spacing:-0.250px;width:92px;text-align:center;-webkit-text-stroke:0.25px currentColor;"><span style="margin-right:0.250px">Unassigned</span></div>
<div class="a" style="left:473.00px;top:852.10px;width:149.00px;height:17.10px;background:#ee5cc7;"></div>
<div class="a" style="left:622.00px;top:852.10px;width:95.00px;height:17.10px;background:#e36734;"></div>
<div class="a" style="left:1185.00px;top:852.10px;width:164.00px;height:17.10px;background:#9456f6;"></div>
<div class="a" style="left:1429.00px;top:852.10px;width:104.00px;height:17.10px;background:#bc0d16;"></div>
<div class="t" style="left:310.00px;top:851px;font-size:9.8px;letter-spacing:-0.250px;-webkit-text-stroke:0.25px currentColor;">29</div>
<div class="t" style="left:335.00px;top:851px;font-size:9.8px;letter-spacing:-0.220px;width:138px;text-align:center;-webkit-text-stroke:0.25px currentColor;"><span style="margin-right:0.220px">2020-11-20 13:07:50.392</span></div>
<div class="t" style="left:473.00px;top:851px;font-size:9.8px;letter-spacing:-0.330px;color:#35222f;width:149px;text-align:center;-webkit-text-stroke:0.15px currentColor;"><span style="margin-right:0.330px">Fill Qty by Symbol &amp; Algo ID</span></div>
<div class="t" style="left:622.00px;top:851px;font-size:9.8px;letter-spacing:-0.136px;color:#fdf6f2;width:95px;text-align:center;-webkit-text-stroke:0.3px currentColor;"><span style="margin-right:0.136px">Below Limit</span></div>
<div class="t" style="left:717.00px;top:851px;font-size:9.8px;letter-spacing:-0.220px;width:138px;text-align:center;-webkit-text-stroke:0.25px currentColor;"><span style="margin-right:0.220px">2020-11-20 13:07:40.392</span></div>
<div class="t" style="left:855.00px;top:851px;font-size:9.8px;letter-spacing:-0.250px;width:66px;text-align:center;-webkit-text-stroke:0.25px currentColor;"><span style="margin-right:0.250px">0</span></div>
<div class="t" style="left:921.00px;top:851px;font-size:9.8px;letter-spacing:-0.200px;width:86px;text-align:center;-webkit-text-stroke:0.25px currentColor;"><span style="margin-right:0.200px">1,000</span></div>
<div class="t" style="left:1007.00px;top:851px;font-size:9.8px;letter-spacing:-0.250px;width:80px;text-align:center;-webkit-text-stroke:0.25px currentColor;"><span style="margin-right:0.250px">10</span></div>
<div class="t" style="left:1089.50px;top:851px;font-size:9.8px;letter-spacing:-0.360px;-webkit-text-stroke:0.25px currentColor;">IBE/E@BATE</div>
<div class="t" style="left:1186.50px;top:851px;font-size:9.8px;letter-spacing:-0.200px;color:#faf6fe;-webkit-text-stroke:0.35px currentColor;">Implementation Shortfall</div>
<div class="t" style="left:1351.00px;top:851px;font-size:9.8px;letter-spacing:-0.250px;-webkit-text-stroke:0.25px currentColor;">820</div>
<div class="t" style="left:1429.00px;top:850px;font-size:9.4px;font-weight:700;letter-spacing:-0.227px;color:#fff;width:104px;text-align:center;"><span style="margin-right:0.227px">New</span></div>
<div class="t" style="left:1533.00px;top:851px;font-size:9.8px;letter-spacing:-0.250px;width:92px;text-align:center;-webkit-text-stroke:0.25px currentColor;"><span style="margin-right:0.250px">Unassigned</span></div>
<div class="a" style="left:306.00px;top:869.15px;width:1319.00px;height:17.05px;background:#3f4448;"></div>
<div class="a" style="left:473.00px;top:869.15px;width:149.00px;height:17.10px;background:#f24e52;"></div>
<div class="a" style="left:622.00px;top:869.15px;width:95.00px;height:17.10px;background:#e36734;"></div>
<div class="a" style="left:1185.00px;top:869.15px;width:164.00px;height:17.10px;background:#9456f6;"></div>
<div class="a" style="left:1429.00px;top:869.15px;width:104.00px;height:17.10px;background:#bc0d16;"></div>
<div class="t" style="left:310.00px;top:868px;font-size:9.8px;letter-spacing:-0.250px;-webkit-text-stroke:0.25px currentColor;">30</div>
<div class="t" style="left:335.00px;top:868px;font-size:9.8px;letter-spacing:-0.220px;width:138px;text-align:center;-webkit-text-stroke:0.25px currentColor;"><span style="margin-right:0.220px">2020-11-20 13:07:50.392</span></div>
<div class="t" style="left:473.00px;top:868px;font-size:9.8px;letter-spacing:-0.280px;color:#fff6f6;width:149px;text-align:center;-webkit-text-stroke:0.3px currentColor;"><span style="margin-right:0.280px">Fill Qty by Symbol &amp; Algo Type</span></div>
<div class="t" style="left:622.00px;top:868px;font-size:9.8px;letter-spacing:-0.136px;color:#fdf6f2;width:95px;text-align:center;-webkit-text-stroke:0.3px currentColor;"><span style="margin-right:0.136px">Below Limit</span></div>
<div class="t" style="left:717.00px;top:868px;font-size:9.8px;letter-spacing:-0.220px;width:138px;text-align:center;-webkit-text-stroke:0.25px currentColor;"><span style="margin-right:0.220px">2020-11-20 13:07:40.392</span></div>
<div class="t" style="left:855.00px;top:868px;font-size:9.8px;letter-spacing:-0.250px;width:66px;text-align:center;-webkit-text-stroke:0.25px currentColor;"><span style="margin-right:0.250px">0</span></div>
<div class="t" style="left:921.00px;top:868px;font-size:9.8px;letter-spacing:-0.200px;width:86px;text-align:center;-webkit-text-stroke:0.25px currentColor;"><span style="margin-right:0.200px">1,000</span></div>
<div class="t" style="left:1007.00px;top:868px;font-size:9.8px;letter-spacing:-0.250px;width:80px;text-align:center;-webkit-text-stroke:0.25px currentColor;"><span style="margin-right:0.250px">10</span></div>
<div class="t" style="left:1089.50px;top:868px;font-size:9.8px;letter-spacing:-0.360px;-webkit-text-stroke:0.25px currentColor;">IBE/E@BATE</div>
<div class="t" style="left:1186.50px;top:868px;font-size:9.8px;letter-spacing:-0.200px;color:#faf6fe;-webkit-text-stroke:0.35px currentColor;">Implementation Shortfall</div>
<div class="t" style="left:1351.00px;top:868px;font-size:9.8px;letter-spacing:-0.250px;-webkit-text-stroke:0.25px currentColor;">All Algo IDs</div>
<div class="t" style="left:1429.00px;top:867px;font-size:9.4px;font-weight:700;letter-spacing:-0.227px;color:#fff;width:104px;text-align:center;"><span style="margin-right:0.227px">New</span></div>
<div class="t" style="left:1533.00px;top:868px;font-size:9.8px;letter-spacing:-0.250px;width:92px;text-align:center;-webkit-text-stroke:0.25px currentColor;"><span style="margin-right:0.250px">Unassigned</span></div>
<div class="a" style="left:473.00px;top:886.20px;width:149.00px;height:17.10px;background:#e36734;"></div>
<div class="a" style="left:622.00px;top:886.20px;width:95.00px;height:17.10px;background:#e36734;"></div>
<div class="a" style="left:1185.00px;top:886.20px;width:164.00px;height:17.10px;background:#998524;"></div>
<div class="a" style="left:1429.00px;top:886.20px;width:104.00px;height:17.10px;background:#bc0d16;"></div>
<div class="t" style="left:310.00px;top:885px;font-size:9.8px;letter-spacing:-0.250px;-webkit-text-stroke:0.25px currentColor;">31</div>
<div class="t" style="left:335.00px;top:885px;font-size:9.8px;letter-spacing:-0.220px;width:138px;text-align:center;-webkit-text-stroke:0.25px currentColor;"><span style="margin-right:0.220px">2020-11-20 13:07:32.959</span></div>
<div class="t" style="left:473.00px;top:885px;font-size:9.8px;letter-spacing:-0.280px;color:#fdf6f2;width:149px;text-align:center;-webkit-text-stroke:0.3px currentColor;"><span style="margin-right:0.280px">Fill Qty by Symbol</span></div>
<div class="t" style="left:622.00px;top:885px;font-size:9.8px;letter-spacing:-0.136px;color:#fdf6f2;width:95px;text-align:center;-webkit-text-stroke:0.3px currentColor;"><span style="margin-right:0.136px">Below Limit</span></div>
<div class="t" style="left:717.00px;top:885px;font-size:9.8px;letter-spacing:-0.220px;width:138px;text-align:center;-webkit-text-stroke:0.25px currentColor;"><span style="margin-right:0.220px">2020-11-20 13:07:22.959</span></div>
<div class="t" style="left:855.00px;top:885px;font-size:9.8px;letter-spacing:-0.250px;width:66px;text-align:center;-webkit-text-stroke:0.25px currentColor;"><span style="margin-right:0.250px">0</span></div>
<div class="t" style="left:921.00px;top:885px;font-size:9.8px;letter-spacing:-0.200px;width:86px;text-align:center;-webkit-text-stroke:0.25px currentColor;"><span style="margin-right:0.200px">1,000</span></div>
<div class="t" style="left:1007.00px;top:885px;font-size:9.8px;letter-spacing:-0.250px;width:80px;text-align:center;-webkit-text-stroke:0.25px currentColor;"><span style="margin-right:0.250px">10</span></div>
<div class="t" style="left:1089.50px;top:885px;font-size:9.8px;letter-spacing:-0.360px;-webkit-text-stroke:0.25px currentColor;">AAL/L@XLON</div>
<div class="t" style="left:1186.50px;top:885px;font-size:9.8px;letter-spacing:-0.200px;color:#f3ecc8;-webkit-text-stroke:0.3px currentColor;">All Algo Types</div>
<div class="t" style="left:1351.00px;top:885px;font-size:9.8px;letter-spacing:-0.250px;-webkit-text-stroke:0.25px currentColor;">All Algo IDs</div>
<div class="t" style="left:1429.00px;top:884px;font-size:9.4px;font-weight:700;letter-spacing:-0.227px;color:#fff;width:104px;text-align:center;"><span style="margin-right:0.227px">New</span></div>
<div class="t" style="left:1533.00px;top:885px;font-size:9.8px;letter-spacing:-0.250px;width:92px;text-align:center;-webkit-text-stroke:0.25px currentColor;"><span style="margin-right:0.250px">Unassigned</span></div>
</div></body></html>
